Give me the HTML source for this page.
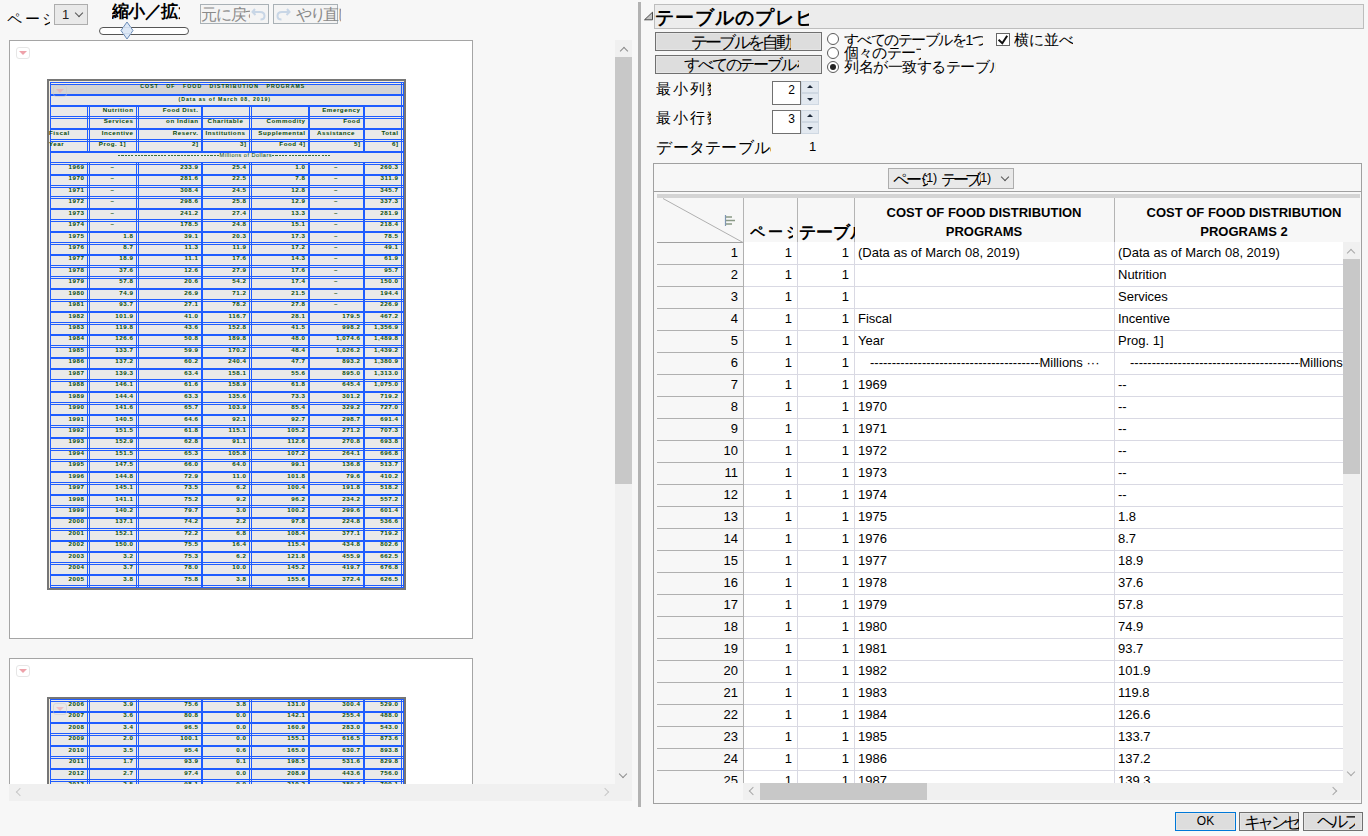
<!DOCTYPE html>
<html><head><meta charset="utf-8"><title>preview</title>
<style>
*{box-sizing:border-box}
html,body{margin:0;padding:0}
body{width:1368px;height:836px;overflow:hidden;position:relative;background:#f7f7f7;font-family:"Liberation Sans",sans-serif;font-size:13px;color:#000}
.a{position:absolute}
.nw{white-space:nowrap;overflow:hidden}
.btn{position:absolute;background:#dddddd;border:1px solid #707070;box-shadow:inset 0 0 0 1px #e5e5e5;white-space:nowrap;overflow:hidden;text-align:center;color:#000}
.dd{position:absolute;background:#e9e9e9;border:1px solid #adadad;white-space:nowrap;overflow:hidden}
.chev{position:absolute;width:6px;height:6px;border-right:1.3px solid #555;border-bottom:1.3px solid #555;transform:rotate(45deg)}
.panel{position:absolute;background:#fff;border:1px solid #a5a5a5}
.ico{position:absolute;width:14px;height:12px;border:1px solid #e6e6e6;border-radius:3px;background:#fff}
.ico:after{content:"";position:absolute;left:1.5px;top:3px;border-left:4px solid transparent;border-right:4px solid transparent;border-top:4.5px solid #eea2aa}
.radio{position:absolute;width:12px;height:12px;border:1px solid #5a5a5a;border-radius:50%;background:#fff}
.rowl{position:absolute;left:0;right:0;height:1px;background:#dcdce6}
.td{position:absolute;white-space:nowrap;overflow:hidden;height:22px;line-height:22px}
</style></head>
<body>
<div class="a" style="white-space:nowrap;overflow:hidden;width:42.6px;left:7.33px;top:11.35px;font-size:14.667px;line-height:17px;letter-spacing:2.57px;">ページ</div>
<div class="dd" style="left:54px;top:4px;width:34px;height:21px"><span class="a" style="left:7px;top:1px;line-height:17px;font-size:13px;color:#222">1</span><div class="chev" style="left:21px;top:5px"></div></div>
<div class="a" style="white-space:nowrap;overflow:hidden;width:68.1px;left:111.57px;top:1.55px;font-size:17.333px;line-height:19px;letter-spacing:-0.41px;font-weight:bold">縮小／拡大</div>
<div class="a" style="left:99px;top:27px;width:90px;height:8px;border:1.3px solid #555;border-radius:4px;background:#fff"></div>
<svg class="a" style="left:120px;top:21px" width="14" height="19" viewBox="0 0 14 19"><path d="M7 1 L13 9.5 L7 18 L1 9.5 Z" fill="#dde8f6" stroke="#6a8cb8" stroke-width="1"/><path d="M3 6.5 H11 M3 12.5 H11" stroke="#c9d6e8" stroke-width="0.8"/></svg>
<div class="a" style="left:200px;top:4px;width:69px;height:20px;border:1px solid #a9b1b6;background:#f4f4f4"></div>
<div class="a" style="white-space:nowrap;overflow:hidden;width:48.9px;left:201.10px;top:5.70px;font-size:16.000px;line-height:18px;letter-spacing:-1.23px;color:#8a8a8a">元に戻す</div>
<svg class="a" style="left:251px;top:7px" width="16" height="14" viewBox="0 0 16 14"><path d="M4 2 L1.5 5 L4.5 8 M1.8 5 H9 Q13.5 5 13.5 9 Q13.5 12.5 9.5 12.5" fill="none" stroke="#c8d6e6" stroke-width="2"/></svg>
<div class="a" style="left:273px;top:4px;width:65px;height:20px;border:1px solid #a9b1b6;background:#f4f4f4"></div>
<svg class="a" style="left:275px;top:7px" width="16" height="14" viewBox="0 0 16 14"><path d="M12 2 L14.5 5 L11.5 8 M14.2 5 H7 Q2.5 5 2.5 9 Q2.5 12.5 6.5 12.5" fill="none" stroke="#c8d6e6" stroke-width="2"/></svg>
<div class="a" style="white-space:nowrap;overflow:hidden;width:44.6px;left:296.40px;top:5.70px;font-size:16.000px;line-height:18px;letter-spacing:-2.67px;color:#8a8a8a">やり直し</div>
<div class="a" style="left:0;top:40px;width:615px;height:744px;overflow:hidden">
<div class="panel" style="left:9px;top:0px;width:464px;height:599px"></div>
<div class="panel" style="left:9px;top:618px;width:464px;height:200px"></div>
</div>
<div class="ico" style="left:16px;top:47px"></div>
<svg class="a" style="left:47px;top:79px" width="359" height="511" viewBox="0 0 359 511" font-family="Liberation Sans" font-size="6.2" font-weight="bold" letter-spacing="0.55" fill="#064a08" shape-rendering="crispEdges"><rect x="0" y="0" width="359" height="511" fill="#767676"/><rect x="2" y="2" width="355" height="507" fill="#f4eee0"/><rect x="4" y="5" width="351" height="503" fill="#e9e9e9"/><rect x="3" y="5" width="354" height="11" fill="#d4d4d4"/>
<rect x="3" y="3" width="354" height="1" fill="#1e5cff"/>
<rect x="3" y="5" width="354" height="1" fill="#1e5cff"/>
<rect x="3" y="15" width="354" height="1" fill="#1e5cff"/>
<rect x="3" y="16" width="354" height="1" fill="#1e5cff"/>
<rect x="3" y="26" width="354" height="1" fill="#1e5cff"/>
<rect x="3" y="27" width="354" height="1" fill="#1e5cff"/>
<rect x="3" y="37" width="354" height="1" fill="#1e5cff"/>
<rect x="3" y="39" width="354" height="1" fill="#1e5cff"/>
<rect x="3" y="49" width="354" height="1" fill="#1e5cff"/>
<rect x="3" y="50" width="354" height="1" fill="#1e5cff"/>
<rect x="3" y="60" width="354" height="1" fill="#1e5cff"/>
<rect x="3" y="62" width="354" height="1" fill="#1e5cff"/>
<rect x="3" y="72" width="354" height="1" fill="#1e5cff"/>
<rect x="3" y="73" width="354" height="1" fill="#1e5cff"/>
<rect x="3" y="83" width="354" height="1" fill="#1e5cff"/>
<rect x="3" y="85" width="354" height="1" fill="#1e5cff"/>
<rect x="3" y="95" width="354" height="1" fill="#1e5cff"/>
<rect x="3" y="96" width="354" height="1" fill="#1e5cff"/>
<rect x="3" y="106" width="354" height="1" fill="#1e5cff"/>
<rect x="3" y="108" width="354" height="1" fill="#1e5cff"/>
<rect x="3" y="117" width="354" height="1" fill="#1e5cff"/>
<rect x="3" y="119" width="354" height="1" fill="#1e5cff"/>
<rect x="3" y="129" width="354" height="1" fill="#1e5cff"/>
<rect x="3" y="130" width="354" height="1" fill="#1e5cff"/>
<rect x="3" y="140" width="354" height="1" fill="#1e5cff"/>
<rect x="3" y="142" width="354" height="1" fill="#1e5cff"/>
<rect x="3" y="152" width="354" height="1" fill="#1e5cff"/>
<rect x="3" y="153" width="354" height="1" fill="#1e5cff"/>
<rect x="3" y="163" width="354" height="1" fill="#1e5cff"/>
<rect x="3" y="165" width="354" height="1" fill="#1e5cff"/>
<rect x="3" y="175" width="354" height="1" fill="#1e5cff"/>
<rect x="3" y="176" width="354" height="1" fill="#1e5cff"/>
<rect x="3" y="186" width="354" height="1" fill="#1e5cff"/>
<rect x="3" y="188" width="354" height="1" fill="#1e5cff"/>
<rect x="3" y="197" width="354" height="1" fill="#1e5cff"/>
<rect x="3" y="199" width="354" height="1" fill="#1e5cff"/>
<rect x="3" y="209" width="354" height="1" fill="#1e5cff"/>
<rect x="3" y="210" width="354" height="1" fill="#1e5cff"/>
<rect x="3" y="220" width="354" height="1" fill="#1e5cff"/>
<rect x="3" y="222" width="354" height="1" fill="#1e5cff"/>
<rect x="3" y="232" width="354" height="1" fill="#1e5cff"/>
<rect x="3" y="233" width="354" height="1" fill="#1e5cff"/>
<rect x="3" y="243" width="354" height="1" fill="#1e5cff"/>
<rect x="3" y="245" width="354" height="1" fill="#1e5cff"/>
<rect x="3" y="255" width="354" height="1" fill="#1e5cff"/>
<rect x="3" y="256" width="354" height="1" fill="#1e5cff"/>
<rect x="3" y="266" width="354" height="1" fill="#1e5cff"/>
<rect x="3" y="268" width="354" height="1" fill="#1e5cff"/>
<rect x="3" y="278" width="354" height="1" fill="#1e5cff"/>
<rect x="3" y="279" width="354" height="1" fill="#1e5cff"/>
<rect x="3" y="289" width="354" height="1" fill="#1e5cff"/>
<rect x="3" y="290" width="354" height="1" fill="#1e5cff"/>
<rect x="3" y="300" width="354" height="1" fill="#1e5cff"/>
<rect x="3" y="302" width="354" height="1" fill="#1e5cff"/>
<rect x="3" y="312" width="354" height="1" fill="#1e5cff"/>
<rect x="3" y="313" width="354" height="1" fill="#1e5cff"/>
<rect x="3" y="323" width="354" height="1" fill="#1e5cff"/>
<rect x="3" y="325" width="354" height="1" fill="#1e5cff"/>
<rect x="3" y="335" width="354" height="1" fill="#1e5cff"/>
<rect x="3" y="336" width="354" height="1" fill="#1e5cff"/>
<rect x="3" y="346" width="354" height="1" fill="#1e5cff"/>
<rect x="3" y="348" width="354" height="1" fill="#1e5cff"/>
<rect x="3" y="358" width="354" height="1" fill="#1e5cff"/>
<rect x="3" y="359" width="354" height="1" fill="#1e5cff"/>
<rect x="3" y="369" width="354" height="1" fill="#1e5cff"/>
<rect x="3" y="371" width="354" height="1" fill="#1e5cff"/>
<rect x="3" y="380" width="354" height="1" fill="#1e5cff"/>
<rect x="3" y="382" width="354" height="1" fill="#1e5cff"/>
<rect x="3" y="392" width="354" height="1" fill="#1e5cff"/>
<rect x="3" y="393" width="354" height="1" fill="#1e5cff"/>
<rect x="3" y="403" width="354" height="1" fill="#1e5cff"/>
<rect x="3" y="405" width="354" height="1" fill="#1e5cff"/>
<rect x="3" y="415" width="354" height="1" fill="#1e5cff"/>
<rect x="3" y="416" width="354" height="1" fill="#1e5cff"/>
<rect x="3" y="426" width="354" height="1" fill="#1e5cff"/>
<rect x="3" y="428" width="354" height="1" fill="#1e5cff"/>
<rect x="3" y="438" width="354" height="1" fill="#1e5cff"/>
<rect x="3" y="439" width="354" height="1" fill="#1e5cff"/>
<rect x="3" y="449" width="354" height="1" fill="#1e5cff"/>
<rect x="3" y="451" width="354" height="1" fill="#1e5cff"/>
<rect x="3" y="461" width="354" height="1" fill="#1e5cff"/>
<rect x="3" y="462" width="354" height="1" fill="#1e5cff"/>
<rect x="3" y="472" width="354" height="1" fill="#1e5cff"/>
<rect x="3" y="473" width="354" height="1" fill="#1e5cff"/>
<rect x="3" y="483" width="354" height="1" fill="#1e5cff"/>
<rect x="3" y="485" width="354" height="1" fill="#1e5cff"/>
<rect x="3" y="495" width="354" height="1" fill="#1e5cff"/>
<rect x="3" y="496" width="354" height="1" fill="#1e5cff"/>
<rect x="3" y="506" width="354" height="1" fill="#1e5cff"/>
<rect x="3" y="508" width="354" height="1" fill="#1e5cff"/>
<rect x="3" y="3" width="1" height="505" fill="#1e5cff"/>
<rect x="3" y="3" width="1" height="505" fill="#1e5cff"/>
<rect x="354" y="3" width="1" height="505" fill="#1e5cff"/>
<rect x="356" y="3" width="1" height="505" fill="#1e5cff"/>
<rect x="40" y="26" width="1" height="13" fill="#1e5cff"/>
<rect x="42" y="26" width="1" height="13" fill="#1e5cff"/>
<rect x="89" y="26" width="1" height="13" fill="#1e5cff"/>
<rect x="91" y="26" width="1" height="13" fill="#1e5cff"/>
<rect x="154" y="26" width="1" height="13" fill="#1e5cff"/>
<rect x="155" y="26" width="1" height="13" fill="#1e5cff"/>
<rect x="202" y="26" width="1" height="13" fill="#1e5cff"/>
<rect x="204" y="26" width="1" height="13" fill="#1e5cff"/>
<rect x="261" y="26" width="1" height="13" fill="#1e5cff"/>
<rect x="262" y="26" width="1" height="13" fill="#1e5cff"/>
<rect x="316" y="26" width="1" height="13" fill="#1e5cff"/>
<rect x="317" y="26" width="1" height="13" fill="#1e5cff"/>
<rect x="40" y="37" width="1" height="14" fill="#1e5cff"/>
<rect x="42" y="37" width="1" height="14" fill="#1e5cff"/>
<rect x="89" y="37" width="1" height="14" fill="#1e5cff"/>
<rect x="91" y="37" width="1" height="14" fill="#1e5cff"/>
<rect x="154" y="37" width="1" height="14" fill="#1e5cff"/>
<rect x="155" y="37" width="1" height="14" fill="#1e5cff"/>
<rect x="202" y="37" width="1" height="14" fill="#1e5cff"/>
<rect x="204" y="37" width="1" height="14" fill="#1e5cff"/>
<rect x="261" y="37" width="1" height="14" fill="#1e5cff"/>
<rect x="262" y="37" width="1" height="14" fill="#1e5cff"/>
<rect x="316" y="37" width="1" height="14" fill="#1e5cff"/>
<rect x="317" y="37" width="1" height="14" fill="#1e5cff"/>
<rect x="40" y="49" width="1" height="13" fill="#1e5cff"/>
<rect x="42" y="49" width="1" height="13" fill="#1e5cff"/>
<rect x="89" y="49" width="1" height="13" fill="#1e5cff"/>
<rect x="91" y="49" width="1" height="13" fill="#1e5cff"/>
<rect x="154" y="49" width="1" height="13" fill="#1e5cff"/>
<rect x="155" y="49" width="1" height="13" fill="#1e5cff"/>
<rect x="202" y="49" width="1" height="13" fill="#1e5cff"/>
<rect x="204" y="49" width="1" height="13" fill="#1e5cff"/>
<rect x="261" y="49" width="1" height="13" fill="#1e5cff"/>
<rect x="262" y="49" width="1" height="13" fill="#1e5cff"/>
<rect x="316" y="49" width="1" height="13" fill="#1e5cff"/>
<rect x="317" y="49" width="1" height="13" fill="#1e5cff"/>
<rect x="40" y="60" width="1" height="14" fill="#1e5cff"/>
<rect x="42" y="60" width="1" height="14" fill="#1e5cff"/>
<rect x="89" y="60" width="1" height="14" fill="#1e5cff"/>
<rect x="91" y="60" width="1" height="14" fill="#1e5cff"/>
<rect x="154" y="60" width="1" height="14" fill="#1e5cff"/>
<rect x="155" y="60" width="1" height="14" fill="#1e5cff"/>
<rect x="202" y="60" width="1" height="14" fill="#1e5cff"/>
<rect x="204" y="60" width="1" height="14" fill="#1e5cff"/>
<rect x="261" y="60" width="1" height="14" fill="#1e5cff"/>
<rect x="262" y="60" width="1" height="14" fill="#1e5cff"/>
<rect x="316" y="60" width="1" height="14" fill="#1e5cff"/>
<rect x="317" y="60" width="1" height="14" fill="#1e5cff"/>
<rect x="40" y="83" width="1" height="14" fill="#1e5cff"/>
<rect x="42" y="83" width="1" height="14" fill="#1e5cff"/>
<rect x="89" y="83" width="1" height="14" fill="#1e5cff"/>
<rect x="91" y="83" width="1" height="14" fill="#1e5cff"/>
<rect x="154" y="83" width="1" height="14" fill="#1e5cff"/>
<rect x="155" y="83" width="1" height="14" fill="#1e5cff"/>
<rect x="202" y="83" width="1" height="14" fill="#1e5cff"/>
<rect x="204" y="83" width="1" height="14" fill="#1e5cff"/>
<rect x="261" y="83" width="1" height="14" fill="#1e5cff"/>
<rect x="262" y="83" width="1" height="14" fill="#1e5cff"/>
<rect x="316" y="83" width="1" height="14" fill="#1e5cff"/>
<rect x="317" y="83" width="1" height="14" fill="#1e5cff"/>
<rect x="40" y="95" width="1" height="13" fill="#1e5cff"/>
<rect x="42" y="95" width="1" height="13" fill="#1e5cff"/>
<rect x="89" y="95" width="1" height="13" fill="#1e5cff"/>
<rect x="91" y="95" width="1" height="13" fill="#1e5cff"/>
<rect x="154" y="95" width="1" height="13" fill="#1e5cff"/>
<rect x="155" y="95" width="1" height="13" fill="#1e5cff"/>
<rect x="202" y="95" width="1" height="13" fill="#1e5cff"/>
<rect x="204" y="95" width="1" height="13" fill="#1e5cff"/>
<rect x="261" y="95" width="1" height="13" fill="#1e5cff"/>
<rect x="262" y="95" width="1" height="13" fill="#1e5cff"/>
<rect x="316" y="95" width="1" height="13" fill="#1e5cff"/>
<rect x="317" y="95" width="1" height="13" fill="#1e5cff"/>
<rect x="40" y="106" width="1" height="13" fill="#1e5cff"/>
<rect x="42" y="106" width="1" height="13" fill="#1e5cff"/>
<rect x="89" y="106" width="1" height="13" fill="#1e5cff"/>
<rect x="91" y="106" width="1" height="13" fill="#1e5cff"/>
<rect x="154" y="106" width="1" height="13" fill="#1e5cff"/>
<rect x="155" y="106" width="1" height="13" fill="#1e5cff"/>
<rect x="202" y="106" width="1" height="13" fill="#1e5cff"/>
<rect x="204" y="106" width="1" height="13" fill="#1e5cff"/>
<rect x="261" y="106" width="1" height="13" fill="#1e5cff"/>
<rect x="262" y="106" width="1" height="13" fill="#1e5cff"/>
<rect x="316" y="106" width="1" height="13" fill="#1e5cff"/>
<rect x="317" y="106" width="1" height="13" fill="#1e5cff"/>
<rect x="40" y="117" width="1" height="14" fill="#1e5cff"/>
<rect x="42" y="117" width="1" height="14" fill="#1e5cff"/>
<rect x="89" y="117" width="1" height="14" fill="#1e5cff"/>
<rect x="91" y="117" width="1" height="14" fill="#1e5cff"/>
<rect x="154" y="117" width="1" height="14" fill="#1e5cff"/>
<rect x="155" y="117" width="1" height="14" fill="#1e5cff"/>
<rect x="202" y="117" width="1" height="14" fill="#1e5cff"/>
<rect x="204" y="117" width="1" height="14" fill="#1e5cff"/>
<rect x="261" y="117" width="1" height="14" fill="#1e5cff"/>
<rect x="262" y="117" width="1" height="14" fill="#1e5cff"/>
<rect x="316" y="117" width="1" height="14" fill="#1e5cff"/>
<rect x="317" y="117" width="1" height="14" fill="#1e5cff"/>
<rect x="40" y="129" width="1" height="13" fill="#1e5cff"/>
<rect x="42" y="129" width="1" height="13" fill="#1e5cff"/>
<rect x="89" y="129" width="1" height="13" fill="#1e5cff"/>
<rect x="91" y="129" width="1" height="13" fill="#1e5cff"/>
<rect x="154" y="129" width="1" height="13" fill="#1e5cff"/>
<rect x="155" y="129" width="1" height="13" fill="#1e5cff"/>
<rect x="202" y="129" width="1" height="13" fill="#1e5cff"/>
<rect x="204" y="129" width="1" height="13" fill="#1e5cff"/>
<rect x="261" y="129" width="1" height="13" fill="#1e5cff"/>
<rect x="262" y="129" width="1" height="13" fill="#1e5cff"/>
<rect x="316" y="129" width="1" height="13" fill="#1e5cff"/>
<rect x="317" y="129" width="1" height="13" fill="#1e5cff"/>
<rect x="40" y="140" width="1" height="14" fill="#1e5cff"/>
<rect x="42" y="140" width="1" height="14" fill="#1e5cff"/>
<rect x="89" y="140" width="1" height="14" fill="#1e5cff"/>
<rect x="91" y="140" width="1" height="14" fill="#1e5cff"/>
<rect x="154" y="140" width="1" height="14" fill="#1e5cff"/>
<rect x="155" y="140" width="1" height="14" fill="#1e5cff"/>
<rect x="202" y="140" width="1" height="14" fill="#1e5cff"/>
<rect x="204" y="140" width="1" height="14" fill="#1e5cff"/>
<rect x="261" y="140" width="1" height="14" fill="#1e5cff"/>
<rect x="262" y="140" width="1" height="14" fill="#1e5cff"/>
<rect x="316" y="140" width="1" height="14" fill="#1e5cff"/>
<rect x="317" y="140" width="1" height="14" fill="#1e5cff"/>
<rect x="40" y="152" width="1" height="13" fill="#1e5cff"/>
<rect x="42" y="152" width="1" height="13" fill="#1e5cff"/>
<rect x="89" y="152" width="1" height="13" fill="#1e5cff"/>
<rect x="91" y="152" width="1" height="13" fill="#1e5cff"/>
<rect x="154" y="152" width="1" height="13" fill="#1e5cff"/>
<rect x="155" y="152" width="1" height="13" fill="#1e5cff"/>
<rect x="202" y="152" width="1" height="13" fill="#1e5cff"/>
<rect x="204" y="152" width="1" height="13" fill="#1e5cff"/>
<rect x="261" y="152" width="1" height="13" fill="#1e5cff"/>
<rect x="262" y="152" width="1" height="13" fill="#1e5cff"/>
<rect x="316" y="152" width="1" height="13" fill="#1e5cff"/>
<rect x="317" y="152" width="1" height="13" fill="#1e5cff"/>
<rect x="40" y="163" width="1" height="14" fill="#1e5cff"/>
<rect x="42" y="163" width="1" height="14" fill="#1e5cff"/>
<rect x="89" y="163" width="1" height="14" fill="#1e5cff"/>
<rect x="91" y="163" width="1" height="14" fill="#1e5cff"/>
<rect x="154" y="163" width="1" height="14" fill="#1e5cff"/>
<rect x="155" y="163" width="1" height="14" fill="#1e5cff"/>
<rect x="202" y="163" width="1" height="14" fill="#1e5cff"/>
<rect x="204" y="163" width="1" height="14" fill="#1e5cff"/>
<rect x="261" y="163" width="1" height="14" fill="#1e5cff"/>
<rect x="262" y="163" width="1" height="14" fill="#1e5cff"/>
<rect x="316" y="163" width="1" height="14" fill="#1e5cff"/>
<rect x="317" y="163" width="1" height="14" fill="#1e5cff"/>
<rect x="40" y="175" width="1" height="13" fill="#1e5cff"/>
<rect x="42" y="175" width="1" height="13" fill="#1e5cff"/>
<rect x="89" y="175" width="1" height="13" fill="#1e5cff"/>
<rect x="91" y="175" width="1" height="13" fill="#1e5cff"/>
<rect x="154" y="175" width="1" height="13" fill="#1e5cff"/>
<rect x="155" y="175" width="1" height="13" fill="#1e5cff"/>
<rect x="202" y="175" width="1" height="13" fill="#1e5cff"/>
<rect x="204" y="175" width="1" height="13" fill="#1e5cff"/>
<rect x="261" y="175" width="1" height="13" fill="#1e5cff"/>
<rect x="262" y="175" width="1" height="13" fill="#1e5cff"/>
<rect x="316" y="175" width="1" height="13" fill="#1e5cff"/>
<rect x="317" y="175" width="1" height="13" fill="#1e5cff"/>
<rect x="40" y="186" width="1" height="13" fill="#1e5cff"/>
<rect x="42" y="186" width="1" height="13" fill="#1e5cff"/>
<rect x="89" y="186" width="1" height="13" fill="#1e5cff"/>
<rect x="91" y="186" width="1" height="13" fill="#1e5cff"/>
<rect x="154" y="186" width="1" height="13" fill="#1e5cff"/>
<rect x="155" y="186" width="1" height="13" fill="#1e5cff"/>
<rect x="202" y="186" width="1" height="13" fill="#1e5cff"/>
<rect x="204" y="186" width="1" height="13" fill="#1e5cff"/>
<rect x="261" y="186" width="1" height="13" fill="#1e5cff"/>
<rect x="262" y="186" width="1" height="13" fill="#1e5cff"/>
<rect x="316" y="186" width="1" height="13" fill="#1e5cff"/>
<rect x="317" y="186" width="1" height="13" fill="#1e5cff"/>
<rect x="40" y="197" width="1" height="14" fill="#1e5cff"/>
<rect x="42" y="197" width="1" height="14" fill="#1e5cff"/>
<rect x="89" y="197" width="1" height="14" fill="#1e5cff"/>
<rect x="91" y="197" width="1" height="14" fill="#1e5cff"/>
<rect x="154" y="197" width="1" height="14" fill="#1e5cff"/>
<rect x="155" y="197" width="1" height="14" fill="#1e5cff"/>
<rect x="202" y="197" width="1" height="14" fill="#1e5cff"/>
<rect x="204" y="197" width="1" height="14" fill="#1e5cff"/>
<rect x="261" y="197" width="1" height="14" fill="#1e5cff"/>
<rect x="262" y="197" width="1" height="14" fill="#1e5cff"/>
<rect x="316" y="197" width="1" height="14" fill="#1e5cff"/>
<rect x="317" y="197" width="1" height="14" fill="#1e5cff"/>
<rect x="40" y="209" width="1" height="13" fill="#1e5cff"/>
<rect x="42" y="209" width="1" height="13" fill="#1e5cff"/>
<rect x="89" y="209" width="1" height="13" fill="#1e5cff"/>
<rect x="91" y="209" width="1" height="13" fill="#1e5cff"/>
<rect x="154" y="209" width="1" height="13" fill="#1e5cff"/>
<rect x="155" y="209" width="1" height="13" fill="#1e5cff"/>
<rect x="202" y="209" width="1" height="13" fill="#1e5cff"/>
<rect x="204" y="209" width="1" height="13" fill="#1e5cff"/>
<rect x="261" y="209" width="1" height="13" fill="#1e5cff"/>
<rect x="262" y="209" width="1" height="13" fill="#1e5cff"/>
<rect x="316" y="209" width="1" height="13" fill="#1e5cff"/>
<rect x="317" y="209" width="1" height="13" fill="#1e5cff"/>
<rect x="40" y="220" width="1" height="14" fill="#1e5cff"/>
<rect x="42" y="220" width="1" height="14" fill="#1e5cff"/>
<rect x="89" y="220" width="1" height="14" fill="#1e5cff"/>
<rect x="91" y="220" width="1" height="14" fill="#1e5cff"/>
<rect x="154" y="220" width="1" height="14" fill="#1e5cff"/>
<rect x="155" y="220" width="1" height="14" fill="#1e5cff"/>
<rect x="202" y="220" width="1" height="14" fill="#1e5cff"/>
<rect x="204" y="220" width="1" height="14" fill="#1e5cff"/>
<rect x="261" y="220" width="1" height="14" fill="#1e5cff"/>
<rect x="262" y="220" width="1" height="14" fill="#1e5cff"/>
<rect x="316" y="220" width="1" height="14" fill="#1e5cff"/>
<rect x="317" y="220" width="1" height="14" fill="#1e5cff"/>
<rect x="40" y="232" width="1" height="13" fill="#1e5cff"/>
<rect x="42" y="232" width="1" height="13" fill="#1e5cff"/>
<rect x="89" y="232" width="1" height="13" fill="#1e5cff"/>
<rect x="91" y="232" width="1" height="13" fill="#1e5cff"/>
<rect x="154" y="232" width="1" height="13" fill="#1e5cff"/>
<rect x="155" y="232" width="1" height="13" fill="#1e5cff"/>
<rect x="202" y="232" width="1" height="13" fill="#1e5cff"/>
<rect x="204" y="232" width="1" height="13" fill="#1e5cff"/>
<rect x="261" y="232" width="1" height="13" fill="#1e5cff"/>
<rect x="262" y="232" width="1" height="13" fill="#1e5cff"/>
<rect x="316" y="232" width="1" height="13" fill="#1e5cff"/>
<rect x="317" y="232" width="1" height="13" fill="#1e5cff"/>
<rect x="40" y="243" width="1" height="14" fill="#1e5cff"/>
<rect x="42" y="243" width="1" height="14" fill="#1e5cff"/>
<rect x="89" y="243" width="1" height="14" fill="#1e5cff"/>
<rect x="91" y="243" width="1" height="14" fill="#1e5cff"/>
<rect x="154" y="243" width="1" height="14" fill="#1e5cff"/>
<rect x="155" y="243" width="1" height="14" fill="#1e5cff"/>
<rect x="202" y="243" width="1" height="14" fill="#1e5cff"/>
<rect x="204" y="243" width="1" height="14" fill="#1e5cff"/>
<rect x="261" y="243" width="1" height="14" fill="#1e5cff"/>
<rect x="262" y="243" width="1" height="14" fill="#1e5cff"/>
<rect x="316" y="243" width="1" height="14" fill="#1e5cff"/>
<rect x="317" y="243" width="1" height="14" fill="#1e5cff"/>
<rect x="40" y="255" width="1" height="13" fill="#1e5cff"/>
<rect x="42" y="255" width="1" height="13" fill="#1e5cff"/>
<rect x="89" y="255" width="1" height="13" fill="#1e5cff"/>
<rect x="91" y="255" width="1" height="13" fill="#1e5cff"/>
<rect x="154" y="255" width="1" height="13" fill="#1e5cff"/>
<rect x="155" y="255" width="1" height="13" fill="#1e5cff"/>
<rect x="202" y="255" width="1" height="13" fill="#1e5cff"/>
<rect x="204" y="255" width="1" height="13" fill="#1e5cff"/>
<rect x="261" y="255" width="1" height="13" fill="#1e5cff"/>
<rect x="262" y="255" width="1" height="13" fill="#1e5cff"/>
<rect x="316" y="255" width="1" height="13" fill="#1e5cff"/>
<rect x="317" y="255" width="1" height="13" fill="#1e5cff"/>
<rect x="40" y="266" width="1" height="14" fill="#1e5cff"/>
<rect x="42" y="266" width="1" height="14" fill="#1e5cff"/>
<rect x="89" y="266" width="1" height="14" fill="#1e5cff"/>
<rect x="91" y="266" width="1" height="14" fill="#1e5cff"/>
<rect x="154" y="266" width="1" height="14" fill="#1e5cff"/>
<rect x="155" y="266" width="1" height="14" fill="#1e5cff"/>
<rect x="202" y="266" width="1" height="14" fill="#1e5cff"/>
<rect x="204" y="266" width="1" height="14" fill="#1e5cff"/>
<rect x="261" y="266" width="1" height="14" fill="#1e5cff"/>
<rect x="262" y="266" width="1" height="14" fill="#1e5cff"/>
<rect x="316" y="266" width="1" height="14" fill="#1e5cff"/>
<rect x="317" y="266" width="1" height="14" fill="#1e5cff"/>
<rect x="40" y="278" width="1" height="13" fill="#1e5cff"/>
<rect x="42" y="278" width="1" height="13" fill="#1e5cff"/>
<rect x="89" y="278" width="1" height="13" fill="#1e5cff"/>
<rect x="91" y="278" width="1" height="13" fill="#1e5cff"/>
<rect x="154" y="278" width="1" height="13" fill="#1e5cff"/>
<rect x="155" y="278" width="1" height="13" fill="#1e5cff"/>
<rect x="202" y="278" width="1" height="13" fill="#1e5cff"/>
<rect x="204" y="278" width="1" height="13" fill="#1e5cff"/>
<rect x="261" y="278" width="1" height="13" fill="#1e5cff"/>
<rect x="262" y="278" width="1" height="13" fill="#1e5cff"/>
<rect x="316" y="278" width="1" height="13" fill="#1e5cff"/>
<rect x="317" y="278" width="1" height="13" fill="#1e5cff"/>
<rect x="40" y="289" width="1" height="13" fill="#1e5cff"/>
<rect x="42" y="289" width="1" height="13" fill="#1e5cff"/>
<rect x="89" y="289" width="1" height="13" fill="#1e5cff"/>
<rect x="91" y="289" width="1" height="13" fill="#1e5cff"/>
<rect x="154" y="289" width="1" height="13" fill="#1e5cff"/>
<rect x="155" y="289" width="1" height="13" fill="#1e5cff"/>
<rect x="202" y="289" width="1" height="13" fill="#1e5cff"/>
<rect x="204" y="289" width="1" height="13" fill="#1e5cff"/>
<rect x="261" y="289" width="1" height="13" fill="#1e5cff"/>
<rect x="262" y="289" width="1" height="13" fill="#1e5cff"/>
<rect x="316" y="289" width="1" height="13" fill="#1e5cff"/>
<rect x="317" y="289" width="1" height="13" fill="#1e5cff"/>
<rect x="40" y="300" width="1" height="14" fill="#1e5cff"/>
<rect x="42" y="300" width="1" height="14" fill="#1e5cff"/>
<rect x="89" y="300" width="1" height="14" fill="#1e5cff"/>
<rect x="91" y="300" width="1" height="14" fill="#1e5cff"/>
<rect x="154" y="300" width="1" height="14" fill="#1e5cff"/>
<rect x="155" y="300" width="1" height="14" fill="#1e5cff"/>
<rect x="202" y="300" width="1" height="14" fill="#1e5cff"/>
<rect x="204" y="300" width="1" height="14" fill="#1e5cff"/>
<rect x="261" y="300" width="1" height="14" fill="#1e5cff"/>
<rect x="262" y="300" width="1" height="14" fill="#1e5cff"/>
<rect x="316" y="300" width="1" height="14" fill="#1e5cff"/>
<rect x="317" y="300" width="1" height="14" fill="#1e5cff"/>
<rect x="40" y="312" width="1" height="13" fill="#1e5cff"/>
<rect x="42" y="312" width="1" height="13" fill="#1e5cff"/>
<rect x="89" y="312" width="1" height="13" fill="#1e5cff"/>
<rect x="91" y="312" width="1" height="13" fill="#1e5cff"/>
<rect x="154" y="312" width="1" height="13" fill="#1e5cff"/>
<rect x="155" y="312" width="1" height="13" fill="#1e5cff"/>
<rect x="202" y="312" width="1" height="13" fill="#1e5cff"/>
<rect x="204" y="312" width="1" height="13" fill="#1e5cff"/>
<rect x="261" y="312" width="1" height="13" fill="#1e5cff"/>
<rect x="262" y="312" width="1" height="13" fill="#1e5cff"/>
<rect x="316" y="312" width="1" height="13" fill="#1e5cff"/>
<rect x="317" y="312" width="1" height="13" fill="#1e5cff"/>
<rect x="40" y="323" width="1" height="14" fill="#1e5cff"/>
<rect x="42" y="323" width="1" height="14" fill="#1e5cff"/>
<rect x="89" y="323" width="1" height="14" fill="#1e5cff"/>
<rect x="91" y="323" width="1" height="14" fill="#1e5cff"/>
<rect x="154" y="323" width="1" height="14" fill="#1e5cff"/>
<rect x="155" y="323" width="1" height="14" fill="#1e5cff"/>
<rect x="202" y="323" width="1" height="14" fill="#1e5cff"/>
<rect x="204" y="323" width="1" height="14" fill="#1e5cff"/>
<rect x="261" y="323" width="1" height="14" fill="#1e5cff"/>
<rect x="262" y="323" width="1" height="14" fill="#1e5cff"/>
<rect x="316" y="323" width="1" height="14" fill="#1e5cff"/>
<rect x="317" y="323" width="1" height="14" fill="#1e5cff"/>
<rect x="40" y="335" width="1" height="13" fill="#1e5cff"/>
<rect x="42" y="335" width="1" height="13" fill="#1e5cff"/>
<rect x="89" y="335" width="1" height="13" fill="#1e5cff"/>
<rect x="91" y="335" width="1" height="13" fill="#1e5cff"/>
<rect x="154" y="335" width="1" height="13" fill="#1e5cff"/>
<rect x="155" y="335" width="1" height="13" fill="#1e5cff"/>
<rect x="202" y="335" width="1" height="13" fill="#1e5cff"/>
<rect x="204" y="335" width="1" height="13" fill="#1e5cff"/>
<rect x="261" y="335" width="1" height="13" fill="#1e5cff"/>
<rect x="262" y="335" width="1" height="13" fill="#1e5cff"/>
<rect x="316" y="335" width="1" height="13" fill="#1e5cff"/>
<rect x="317" y="335" width="1" height="13" fill="#1e5cff"/>
<rect x="40" y="346" width="1" height="14" fill="#1e5cff"/>
<rect x="42" y="346" width="1" height="14" fill="#1e5cff"/>
<rect x="89" y="346" width="1" height="14" fill="#1e5cff"/>
<rect x="91" y="346" width="1" height="14" fill="#1e5cff"/>
<rect x="154" y="346" width="1" height="14" fill="#1e5cff"/>
<rect x="155" y="346" width="1" height="14" fill="#1e5cff"/>
<rect x="202" y="346" width="1" height="14" fill="#1e5cff"/>
<rect x="204" y="346" width="1" height="14" fill="#1e5cff"/>
<rect x="261" y="346" width="1" height="14" fill="#1e5cff"/>
<rect x="262" y="346" width="1" height="14" fill="#1e5cff"/>
<rect x="316" y="346" width="1" height="14" fill="#1e5cff"/>
<rect x="317" y="346" width="1" height="14" fill="#1e5cff"/>
<rect x="40" y="358" width="1" height="13" fill="#1e5cff"/>
<rect x="42" y="358" width="1" height="13" fill="#1e5cff"/>
<rect x="89" y="358" width="1" height="13" fill="#1e5cff"/>
<rect x="91" y="358" width="1" height="13" fill="#1e5cff"/>
<rect x="154" y="358" width="1" height="13" fill="#1e5cff"/>
<rect x="155" y="358" width="1" height="13" fill="#1e5cff"/>
<rect x="202" y="358" width="1" height="13" fill="#1e5cff"/>
<rect x="204" y="358" width="1" height="13" fill="#1e5cff"/>
<rect x="261" y="358" width="1" height="13" fill="#1e5cff"/>
<rect x="262" y="358" width="1" height="13" fill="#1e5cff"/>
<rect x="316" y="358" width="1" height="13" fill="#1e5cff"/>
<rect x="317" y="358" width="1" height="13" fill="#1e5cff"/>
<rect x="40" y="369" width="1" height="13" fill="#1e5cff"/>
<rect x="42" y="369" width="1" height="13" fill="#1e5cff"/>
<rect x="89" y="369" width="1" height="13" fill="#1e5cff"/>
<rect x="91" y="369" width="1" height="13" fill="#1e5cff"/>
<rect x="154" y="369" width="1" height="13" fill="#1e5cff"/>
<rect x="155" y="369" width="1" height="13" fill="#1e5cff"/>
<rect x="202" y="369" width="1" height="13" fill="#1e5cff"/>
<rect x="204" y="369" width="1" height="13" fill="#1e5cff"/>
<rect x="261" y="369" width="1" height="13" fill="#1e5cff"/>
<rect x="262" y="369" width="1" height="13" fill="#1e5cff"/>
<rect x="316" y="369" width="1" height="13" fill="#1e5cff"/>
<rect x="317" y="369" width="1" height="13" fill="#1e5cff"/>
<rect x="40" y="380" width="1" height="14" fill="#1e5cff"/>
<rect x="42" y="380" width="1" height="14" fill="#1e5cff"/>
<rect x="89" y="380" width="1" height="14" fill="#1e5cff"/>
<rect x="91" y="380" width="1" height="14" fill="#1e5cff"/>
<rect x="154" y="380" width="1" height="14" fill="#1e5cff"/>
<rect x="155" y="380" width="1" height="14" fill="#1e5cff"/>
<rect x="202" y="380" width="1" height="14" fill="#1e5cff"/>
<rect x="204" y="380" width="1" height="14" fill="#1e5cff"/>
<rect x="261" y="380" width="1" height="14" fill="#1e5cff"/>
<rect x="262" y="380" width="1" height="14" fill="#1e5cff"/>
<rect x="316" y="380" width="1" height="14" fill="#1e5cff"/>
<rect x="317" y="380" width="1" height="14" fill="#1e5cff"/>
<rect x="40" y="392" width="1" height="13" fill="#1e5cff"/>
<rect x="42" y="392" width="1" height="13" fill="#1e5cff"/>
<rect x="89" y="392" width="1" height="13" fill="#1e5cff"/>
<rect x="91" y="392" width="1" height="13" fill="#1e5cff"/>
<rect x="154" y="392" width="1" height="13" fill="#1e5cff"/>
<rect x="155" y="392" width="1" height="13" fill="#1e5cff"/>
<rect x="202" y="392" width="1" height="13" fill="#1e5cff"/>
<rect x="204" y="392" width="1" height="13" fill="#1e5cff"/>
<rect x="261" y="392" width="1" height="13" fill="#1e5cff"/>
<rect x="262" y="392" width="1" height="13" fill="#1e5cff"/>
<rect x="316" y="392" width="1" height="13" fill="#1e5cff"/>
<rect x="317" y="392" width="1" height="13" fill="#1e5cff"/>
<rect x="40" y="403" width="1" height="14" fill="#1e5cff"/>
<rect x="42" y="403" width="1" height="14" fill="#1e5cff"/>
<rect x="89" y="403" width="1" height="14" fill="#1e5cff"/>
<rect x="91" y="403" width="1" height="14" fill="#1e5cff"/>
<rect x="154" y="403" width="1" height="14" fill="#1e5cff"/>
<rect x="155" y="403" width="1" height="14" fill="#1e5cff"/>
<rect x="202" y="403" width="1" height="14" fill="#1e5cff"/>
<rect x="204" y="403" width="1" height="14" fill="#1e5cff"/>
<rect x="261" y="403" width="1" height="14" fill="#1e5cff"/>
<rect x="262" y="403" width="1" height="14" fill="#1e5cff"/>
<rect x="316" y="403" width="1" height="14" fill="#1e5cff"/>
<rect x="317" y="403" width="1" height="14" fill="#1e5cff"/>
<rect x="40" y="415" width="1" height="13" fill="#1e5cff"/>
<rect x="42" y="415" width="1" height="13" fill="#1e5cff"/>
<rect x="89" y="415" width="1" height="13" fill="#1e5cff"/>
<rect x="91" y="415" width="1" height="13" fill="#1e5cff"/>
<rect x="154" y="415" width="1" height="13" fill="#1e5cff"/>
<rect x="155" y="415" width="1" height="13" fill="#1e5cff"/>
<rect x="202" y="415" width="1" height="13" fill="#1e5cff"/>
<rect x="204" y="415" width="1" height="13" fill="#1e5cff"/>
<rect x="261" y="415" width="1" height="13" fill="#1e5cff"/>
<rect x="262" y="415" width="1" height="13" fill="#1e5cff"/>
<rect x="316" y="415" width="1" height="13" fill="#1e5cff"/>
<rect x="317" y="415" width="1" height="13" fill="#1e5cff"/>
<rect x="40" y="426" width="1" height="14" fill="#1e5cff"/>
<rect x="42" y="426" width="1" height="14" fill="#1e5cff"/>
<rect x="89" y="426" width="1" height="14" fill="#1e5cff"/>
<rect x="91" y="426" width="1" height="14" fill="#1e5cff"/>
<rect x="154" y="426" width="1" height="14" fill="#1e5cff"/>
<rect x="155" y="426" width="1" height="14" fill="#1e5cff"/>
<rect x="202" y="426" width="1" height="14" fill="#1e5cff"/>
<rect x="204" y="426" width="1" height="14" fill="#1e5cff"/>
<rect x="261" y="426" width="1" height="14" fill="#1e5cff"/>
<rect x="262" y="426" width="1" height="14" fill="#1e5cff"/>
<rect x="316" y="426" width="1" height="14" fill="#1e5cff"/>
<rect x="317" y="426" width="1" height="14" fill="#1e5cff"/>
<rect x="40" y="438" width="1" height="13" fill="#1e5cff"/>
<rect x="42" y="438" width="1" height="13" fill="#1e5cff"/>
<rect x="89" y="438" width="1" height="13" fill="#1e5cff"/>
<rect x="91" y="438" width="1" height="13" fill="#1e5cff"/>
<rect x="154" y="438" width="1" height="13" fill="#1e5cff"/>
<rect x="155" y="438" width="1" height="13" fill="#1e5cff"/>
<rect x="202" y="438" width="1" height="13" fill="#1e5cff"/>
<rect x="204" y="438" width="1" height="13" fill="#1e5cff"/>
<rect x="261" y="438" width="1" height="13" fill="#1e5cff"/>
<rect x="262" y="438" width="1" height="13" fill="#1e5cff"/>
<rect x="316" y="438" width="1" height="13" fill="#1e5cff"/>
<rect x="317" y="438" width="1" height="13" fill="#1e5cff"/>
<rect x="40" y="449" width="1" height="14" fill="#1e5cff"/>
<rect x="42" y="449" width="1" height="14" fill="#1e5cff"/>
<rect x="89" y="449" width="1" height="14" fill="#1e5cff"/>
<rect x="91" y="449" width="1" height="14" fill="#1e5cff"/>
<rect x="154" y="449" width="1" height="14" fill="#1e5cff"/>
<rect x="155" y="449" width="1" height="14" fill="#1e5cff"/>
<rect x="202" y="449" width="1" height="14" fill="#1e5cff"/>
<rect x="204" y="449" width="1" height="14" fill="#1e5cff"/>
<rect x="261" y="449" width="1" height="14" fill="#1e5cff"/>
<rect x="262" y="449" width="1" height="14" fill="#1e5cff"/>
<rect x="316" y="449" width="1" height="14" fill="#1e5cff"/>
<rect x="317" y="449" width="1" height="14" fill="#1e5cff"/>
<rect x="40" y="461" width="1" height="13" fill="#1e5cff"/>
<rect x="42" y="461" width="1" height="13" fill="#1e5cff"/>
<rect x="89" y="461" width="1" height="13" fill="#1e5cff"/>
<rect x="91" y="461" width="1" height="13" fill="#1e5cff"/>
<rect x="154" y="461" width="1" height="13" fill="#1e5cff"/>
<rect x="155" y="461" width="1" height="13" fill="#1e5cff"/>
<rect x="202" y="461" width="1" height="13" fill="#1e5cff"/>
<rect x="204" y="461" width="1" height="13" fill="#1e5cff"/>
<rect x="261" y="461" width="1" height="13" fill="#1e5cff"/>
<rect x="262" y="461" width="1" height="13" fill="#1e5cff"/>
<rect x="316" y="461" width="1" height="13" fill="#1e5cff"/>
<rect x="317" y="461" width="1" height="13" fill="#1e5cff"/>
<rect x="40" y="472" width="1" height="13" fill="#1e5cff"/>
<rect x="42" y="472" width="1" height="13" fill="#1e5cff"/>
<rect x="89" y="472" width="1" height="13" fill="#1e5cff"/>
<rect x="91" y="472" width="1" height="13" fill="#1e5cff"/>
<rect x="154" y="472" width="1" height="13" fill="#1e5cff"/>
<rect x="155" y="472" width="1" height="13" fill="#1e5cff"/>
<rect x="202" y="472" width="1" height="13" fill="#1e5cff"/>
<rect x="204" y="472" width="1" height="13" fill="#1e5cff"/>
<rect x="261" y="472" width="1" height="13" fill="#1e5cff"/>
<rect x="262" y="472" width="1" height="13" fill="#1e5cff"/>
<rect x="316" y="472" width="1" height="13" fill="#1e5cff"/>
<rect x="317" y="472" width="1" height="13" fill="#1e5cff"/>
<rect x="40" y="483" width="1" height="14" fill="#1e5cff"/>
<rect x="42" y="483" width="1" height="14" fill="#1e5cff"/>
<rect x="89" y="483" width="1" height="14" fill="#1e5cff"/>
<rect x="91" y="483" width="1" height="14" fill="#1e5cff"/>
<rect x="154" y="483" width="1" height="14" fill="#1e5cff"/>
<rect x="155" y="483" width="1" height="14" fill="#1e5cff"/>
<rect x="202" y="483" width="1" height="14" fill="#1e5cff"/>
<rect x="204" y="483" width="1" height="14" fill="#1e5cff"/>
<rect x="261" y="483" width="1" height="14" fill="#1e5cff"/>
<rect x="262" y="483" width="1" height="14" fill="#1e5cff"/>
<rect x="316" y="483" width="1" height="14" fill="#1e5cff"/>
<rect x="317" y="483" width="1" height="14" fill="#1e5cff"/>
<rect x="40" y="495" width="1" height="13" fill="#1e5cff"/>
<rect x="42" y="495" width="1" height="13" fill="#1e5cff"/>
<rect x="89" y="495" width="1" height="13" fill="#1e5cff"/>
<rect x="91" y="495" width="1" height="13" fill="#1e5cff"/>
<rect x="154" y="495" width="1" height="13" fill="#1e5cff"/>
<rect x="155" y="495" width="1" height="13" fill="#1e5cff"/>
<rect x="202" y="495" width="1" height="13" fill="#1e5cff"/>
<rect x="204" y="495" width="1" height="13" fill="#1e5cff"/>
<rect x="261" y="495" width="1" height="13" fill="#1e5cff"/>
<rect x="262" y="495" width="1" height="13" fill="#1e5cff"/>
<rect x="316" y="495" width="1" height="13" fill="#1e5cff"/>
<rect x="317" y="495" width="1" height="13" fill="#1e5cff"/>
<text x="175.8" y="9.00" text-anchor="middle" letter-spacing="1.04" font-size="5.2" font-weight="bold">COST   OF   FOOD   DISTRIBUTION   PROGRAMS</text>
<text x="177.8" y="21.53" text-anchor="middle" letter-spacing="0.96" font-size="5.2" font-weight="bold">(Data as of March 08, 2019)</text>
<text x="86.5" y="32.77" text-anchor="end">Nutrition</text>
<text x="151.5" y="32.77" text-anchor="end">Food Dist.</text>
<text x="313.5" y="32.77" text-anchor="end">Emergency</text>
<text x="86.5" y="44.20" text-anchor="end">Services</text>
<text x="151.5" y="44.20" text-anchor="end">on Indian</text>
<text x="178.5" y="44.20" text-anchor="middle">Charitable</text>
<text x="258.5" y="44.20" text-anchor="end">Commodity</text>
<text x="313.5" y="44.20" text-anchor="end">Food</text>
<text x="2.0" y="55.64">Fiscal</text>
<text x="86.5" y="55.64" text-anchor="end">Incentive</text>
<text x="151.5" y="55.64" text-anchor="end">Reserv.</text>
<text x="178.5" y="55.64" text-anchor="middle">Institutions</text>
<text x="258.5" y="55.64" text-anchor="end">Supplemental</text>
<text x="289.0" y="55.64" text-anchor="middle">Assistance</text>
<text x="351.5" y="55.64" text-anchor="end">Total</text>
<text x="2.0" y="67.08">Year</text>
<text x="65.5" y="67.08" text-anchor="middle">Prog. 1]</text>
<text x="151.5" y="67.08" text-anchor="end">2]</text>
<text x="199.5" y="67.08" text-anchor="end">3]</text>
<text x="258.5" y="67.08" text-anchor="end">Food 4]</text>
<text x="313.5" y="67.08" text-anchor="end">5]</text>
<text x="351.5" y="67.08" text-anchor="end">6]</text>
<text x="198.8" y="78.11" text-anchor="middle" letter-spacing="0.45" font-size="5.6" font-weight="normal">Millions of Dollars</text>
<line x1="71" y1="76.61" x2="172.5" y2="76.61" stroke="#064a08" stroke-width="0.9" stroke-dasharray="2.2 1.1" opacity="0.85"/>
<line x1="225" y1="76.61" x2="284" y2="76.61" stroke="#064a08" stroke-width="0.9" stroke-dasharray="2.2 1.1" opacity="0.85"/>
<text x="37.5" y="89.94" text-anchor="end">1969</text>
<text x="65.5" y="89.94" text-anchor="middle">–</text>
<text x="151.5" y="89.94" text-anchor="end">233.9</text>
<text x="199.5" y="89.94" text-anchor="end">25.4</text>
<text x="258.5" y="89.94" text-anchor="end">1.0</text>
<text x="289.0" y="89.94" text-anchor="middle">–</text>
<text x="351.5" y="89.94" text-anchor="end">260.3</text>
<text x="37.5" y="101.38" text-anchor="end">1970</text>
<text x="65.5" y="101.38" text-anchor="middle">–</text>
<text x="151.5" y="101.38" text-anchor="end">281.6</text>
<text x="199.5" y="101.38" text-anchor="end">22.5</text>
<text x="258.5" y="101.38" text-anchor="end">7.8</text>
<text x="289.0" y="101.38" text-anchor="middle">–</text>
<text x="351.5" y="101.38" text-anchor="end">311.9</text>
<text x="37.5" y="112.81" text-anchor="end">1971</text>
<text x="65.5" y="112.81" text-anchor="middle">–</text>
<text x="151.5" y="112.81" text-anchor="end">308.4</text>
<text x="199.5" y="112.81" text-anchor="end">24.5</text>
<text x="258.5" y="112.81" text-anchor="end">12.8</text>
<text x="289.0" y="112.81" text-anchor="middle">–</text>
<text x="351.5" y="112.81" text-anchor="end">345.7</text>
<text x="37.5" y="124.25" text-anchor="end">1972</text>
<text x="65.5" y="124.25" text-anchor="middle">–</text>
<text x="151.5" y="124.25" text-anchor="end">298.6</text>
<text x="199.5" y="124.25" text-anchor="end">25.8</text>
<text x="258.5" y="124.25" text-anchor="end">12.9</text>
<text x="289.0" y="124.25" text-anchor="middle">–</text>
<text x="351.5" y="124.25" text-anchor="end">337.3</text>
<text x="37.5" y="135.69" text-anchor="end">1973</text>
<text x="65.5" y="135.69" text-anchor="middle">–</text>
<text x="151.5" y="135.69" text-anchor="end">241.2</text>
<text x="199.5" y="135.69" text-anchor="end">27.4</text>
<text x="258.5" y="135.69" text-anchor="end">13.3</text>
<text x="289.0" y="135.69" text-anchor="middle">–</text>
<text x="351.5" y="135.69" text-anchor="end">281.9</text>
<text x="37.5" y="147.12" text-anchor="end">1974</text>
<text x="65.5" y="147.12" text-anchor="middle">–</text>
<text x="151.5" y="147.12" text-anchor="end">178.5</text>
<text x="199.5" y="147.12" text-anchor="end">24.8</text>
<text x="258.5" y="147.12" text-anchor="end">15.1</text>
<text x="289.0" y="147.12" text-anchor="middle">–</text>
<text x="351.5" y="147.12" text-anchor="end">218.4</text>
<text x="37.5" y="158.56" text-anchor="end">1975</text>
<text x="86.5" y="158.56" text-anchor="end">1.8</text>
<text x="151.5" y="158.56" text-anchor="end">39.1</text>
<text x="199.5" y="158.56" text-anchor="end">20.3</text>
<text x="258.5" y="158.56" text-anchor="end">17.3</text>
<text x="289.0" y="158.56" text-anchor="middle">–</text>
<text x="351.5" y="158.56" text-anchor="end">78.5</text>
<text x="37.5" y="169.99" text-anchor="end">1976</text>
<text x="86.5" y="169.99" text-anchor="end">8.7</text>
<text x="151.5" y="169.99" text-anchor="end">11.3</text>
<text x="199.5" y="169.99" text-anchor="end">11.9</text>
<text x="258.5" y="169.99" text-anchor="end">17.2</text>
<text x="289.0" y="169.99" text-anchor="middle">–</text>
<text x="351.5" y="169.99" text-anchor="end">49.1</text>
<text x="37.5" y="181.43" text-anchor="end">1977</text>
<text x="86.5" y="181.43" text-anchor="end">18.9</text>
<text x="151.5" y="181.43" text-anchor="end">11.1</text>
<text x="199.5" y="181.43" text-anchor="end">17.6</text>
<text x="258.5" y="181.43" text-anchor="end">14.3</text>
<text x="289.0" y="181.43" text-anchor="middle">–</text>
<text x="351.5" y="181.43" text-anchor="end">61.9</text>
<text x="37.5" y="192.86" text-anchor="end">1978</text>
<text x="86.5" y="192.86" text-anchor="end">37.6</text>
<text x="151.5" y="192.86" text-anchor="end">12.6</text>
<text x="199.5" y="192.86" text-anchor="end">27.9</text>
<text x="258.5" y="192.86" text-anchor="end">17.6</text>
<text x="289.0" y="192.86" text-anchor="middle">–</text>
<text x="351.5" y="192.86" text-anchor="end">95.7</text>
<text x="37.5" y="204.30" text-anchor="end">1979</text>
<text x="86.5" y="204.30" text-anchor="end">57.8</text>
<text x="151.5" y="204.30" text-anchor="end">20.6</text>
<text x="199.5" y="204.30" text-anchor="end">54.2</text>
<text x="258.5" y="204.30" text-anchor="end">17.4</text>
<text x="289.0" y="204.30" text-anchor="middle">–</text>
<text x="351.5" y="204.30" text-anchor="end">150.0</text>
<text x="37.5" y="215.73" text-anchor="end">1980</text>
<text x="86.5" y="215.73" text-anchor="end">74.9</text>
<text x="151.5" y="215.73" text-anchor="end">26.9</text>
<text x="199.5" y="215.73" text-anchor="end">71.2</text>
<text x="258.5" y="215.73" text-anchor="end">21.5</text>
<text x="289.0" y="215.73" text-anchor="middle">–</text>
<text x="351.5" y="215.73" text-anchor="end">194.4</text>
<text x="37.5" y="227.17" text-anchor="end">1981</text>
<text x="86.5" y="227.17" text-anchor="end">93.7</text>
<text x="151.5" y="227.17" text-anchor="end">27.1</text>
<text x="199.5" y="227.17" text-anchor="end">78.2</text>
<text x="258.5" y="227.17" text-anchor="end">27.8</text>
<text x="289.0" y="227.17" text-anchor="middle">–</text>
<text x="351.5" y="227.17" text-anchor="end">226.9</text>
<text x="37.5" y="238.60" text-anchor="end">1982</text>
<text x="86.5" y="238.60" text-anchor="end">101.9</text>
<text x="151.5" y="238.60" text-anchor="end">41.0</text>
<text x="199.5" y="238.60" text-anchor="end">116.7</text>
<text x="258.5" y="238.60" text-anchor="end">28.1</text>
<text x="313.5" y="238.60" text-anchor="end">179.5</text>
<text x="351.5" y="238.60" text-anchor="end">467.2</text>
<text x="37.5" y="250.04" text-anchor="end">1983</text>
<text x="86.5" y="250.04" text-anchor="end">119.8</text>
<text x="151.5" y="250.04" text-anchor="end">43.6</text>
<text x="199.5" y="250.04" text-anchor="end">152.8</text>
<text x="258.5" y="250.04" text-anchor="end">41.5</text>
<text x="313.5" y="250.04" text-anchor="end">998.2</text>
<text x="351.5" y="250.04" text-anchor="end">1,356.9</text>
<text x="37.5" y="261.47" text-anchor="end">1984</text>
<text x="86.5" y="261.47" text-anchor="end">126.6</text>
<text x="151.5" y="261.47" text-anchor="end">50.8</text>
<text x="199.5" y="261.47" text-anchor="end">189.8</text>
<text x="258.5" y="261.47" text-anchor="end">48.0</text>
<text x="313.5" y="261.47" text-anchor="end">1,074.6</text>
<text x="351.5" y="261.47" text-anchor="end">1,489.8</text>
<text x="37.5" y="272.91" text-anchor="end">1985</text>
<text x="86.5" y="272.91" text-anchor="end">133.7</text>
<text x="151.5" y="272.91" text-anchor="end">59.9</text>
<text x="199.5" y="272.91" text-anchor="end">170.2</text>
<text x="258.5" y="272.91" text-anchor="end">48.4</text>
<text x="313.5" y="272.91" text-anchor="end">1,026.2</text>
<text x="351.5" y="272.91" text-anchor="end">1,439.2</text>
<text x="37.5" y="284.34" text-anchor="end">1986</text>
<text x="86.5" y="284.34" text-anchor="end">137.2</text>
<text x="151.5" y="284.34" text-anchor="end">60.2</text>
<text x="199.5" y="284.34" text-anchor="end">240.4</text>
<text x="258.5" y="284.34" text-anchor="end">47.7</text>
<text x="313.5" y="284.34" text-anchor="end">893.2</text>
<text x="351.5" y="284.34" text-anchor="end">1,380.9</text>
<text x="37.5" y="295.78" text-anchor="end">1987</text>
<text x="86.5" y="295.78" text-anchor="end">139.3</text>
<text x="151.5" y="295.78" text-anchor="end">63.4</text>
<text x="199.5" y="295.78" text-anchor="end">158.1</text>
<text x="258.5" y="295.78" text-anchor="end">55.6</text>
<text x="313.5" y="295.78" text-anchor="end">895.0</text>
<text x="351.5" y="295.78" text-anchor="end">1,313.0</text>
<text x="37.5" y="307.21" text-anchor="end">1988</text>
<text x="86.5" y="307.21" text-anchor="end">146.1</text>
<text x="151.5" y="307.21" text-anchor="end">61.6</text>
<text x="199.5" y="307.21" text-anchor="end">158.9</text>
<text x="258.5" y="307.21" text-anchor="end">61.8</text>
<text x="313.5" y="307.21" text-anchor="end">645.4</text>
<text x="351.5" y="307.21" text-anchor="end">1,075.0</text>
<text x="37.5" y="318.65" text-anchor="end">1989</text>
<text x="86.5" y="318.65" text-anchor="end">144.4</text>
<text x="151.5" y="318.65" text-anchor="end">63.3</text>
<text x="199.5" y="318.65" text-anchor="end">135.6</text>
<text x="258.5" y="318.65" text-anchor="end">73.3</text>
<text x="313.5" y="318.65" text-anchor="end">301.2</text>
<text x="351.5" y="318.65" text-anchor="end">719.2</text>
<text x="37.5" y="330.08" text-anchor="end">1990</text>
<text x="86.5" y="330.08" text-anchor="end">141.6</text>
<text x="151.5" y="330.08" text-anchor="end">65.7</text>
<text x="199.5" y="330.08" text-anchor="end">103.9</text>
<text x="258.5" y="330.08" text-anchor="end">85.4</text>
<text x="313.5" y="330.08" text-anchor="end">329.2</text>
<text x="351.5" y="330.08" text-anchor="end">727.0</text>
<text x="37.5" y="341.52" text-anchor="end">1991</text>
<text x="86.5" y="341.52" text-anchor="end">140.5</text>
<text x="151.5" y="341.52" text-anchor="end">64.6</text>
<text x="199.5" y="341.52" text-anchor="end">92.1</text>
<text x="258.5" y="341.52" text-anchor="end">92.7</text>
<text x="313.5" y="341.52" text-anchor="end">298.7</text>
<text x="351.5" y="341.52" text-anchor="end">691.4</text>
<text x="37.5" y="352.95" text-anchor="end">1992</text>
<text x="86.5" y="352.95" text-anchor="end">151.5</text>
<text x="151.5" y="352.95" text-anchor="end">61.8</text>
<text x="199.5" y="352.95" text-anchor="end">115.1</text>
<text x="258.5" y="352.95" text-anchor="end">105.2</text>
<text x="313.5" y="352.95" text-anchor="end">271.2</text>
<text x="351.5" y="352.95" text-anchor="end">707.3</text>
<text x="37.5" y="364.39" text-anchor="end">1993</text>
<text x="86.5" y="364.39" text-anchor="end">152.9</text>
<text x="151.5" y="364.39" text-anchor="end">62.8</text>
<text x="199.5" y="364.39" text-anchor="end">91.1</text>
<text x="258.5" y="364.39" text-anchor="end">112.6</text>
<text x="313.5" y="364.39" text-anchor="end">270.8</text>
<text x="351.5" y="364.39" text-anchor="end">693.8</text>
<text x="37.5" y="375.82" text-anchor="end">1994</text>
<text x="86.5" y="375.82" text-anchor="end">151.5</text>
<text x="151.5" y="375.82" text-anchor="end">65.3</text>
<text x="199.5" y="375.82" text-anchor="end">105.8</text>
<text x="258.5" y="375.82" text-anchor="end">107.2</text>
<text x="313.5" y="375.82" text-anchor="end">264.1</text>
<text x="351.5" y="375.82" text-anchor="end">696.8</text>
<text x="37.5" y="387.26" text-anchor="end">1995</text>
<text x="86.5" y="387.26" text-anchor="end">147.5</text>
<text x="151.5" y="387.26" text-anchor="end">66.0</text>
<text x="199.5" y="387.26" text-anchor="end">64.0</text>
<text x="258.5" y="387.26" text-anchor="end">99.1</text>
<text x="313.5" y="387.26" text-anchor="end">136.8</text>
<text x="351.5" y="387.26" text-anchor="end">513.7</text>
<text x="37.5" y="398.69" text-anchor="end">1996</text>
<text x="86.5" y="398.69" text-anchor="end">144.8</text>
<text x="151.5" y="398.69" text-anchor="end">72.9</text>
<text x="199.5" y="398.69" text-anchor="end">11.0</text>
<text x="258.5" y="398.69" text-anchor="end">101.8</text>
<text x="313.5" y="398.69" text-anchor="end">79.6</text>
<text x="351.5" y="398.69" text-anchor="end">410.2</text>
<text x="37.5" y="410.13" text-anchor="end">1997</text>
<text x="86.5" y="410.13" text-anchor="end">145.1</text>
<text x="151.5" y="410.13" text-anchor="end">73.5</text>
<text x="199.5" y="410.13" text-anchor="end">6.2</text>
<text x="258.5" y="410.13" text-anchor="end">100.4</text>
<text x="313.5" y="410.13" text-anchor="end">191.8</text>
<text x="351.5" y="410.13" text-anchor="end">518.2</text>
<text x="37.5" y="421.56" text-anchor="end">1998</text>
<text x="86.5" y="421.56" text-anchor="end">141.1</text>
<text x="151.5" y="421.56" text-anchor="end">75.2</text>
<text x="199.5" y="421.56" text-anchor="end">9.2</text>
<text x="258.5" y="421.56" text-anchor="end">96.2</text>
<text x="313.5" y="421.56" text-anchor="end">234.2</text>
<text x="351.5" y="421.56" text-anchor="end">557.2</text>
<text x="37.5" y="433.00" text-anchor="end">1999</text>
<text x="86.5" y="433.00" text-anchor="end">140.2</text>
<text x="151.5" y="433.00" text-anchor="end">79.7</text>
<text x="199.5" y="433.00" text-anchor="end">3.0</text>
<text x="258.5" y="433.00" text-anchor="end">100.2</text>
<text x="313.5" y="433.00" text-anchor="end">299.6</text>
<text x="351.5" y="433.00" text-anchor="end">601.4</text>
<text x="37.5" y="444.43" text-anchor="end">2000</text>
<text x="86.5" y="444.43" text-anchor="end">137.1</text>
<text x="151.5" y="444.43" text-anchor="end">74.2</text>
<text x="199.5" y="444.43" text-anchor="end">2.2</text>
<text x="258.5" y="444.43" text-anchor="end">97.8</text>
<text x="313.5" y="444.43" text-anchor="end">224.8</text>
<text x="351.5" y="444.43" text-anchor="end">536.6</text>
<text x="37.5" y="455.87" text-anchor="end">2001</text>
<text x="86.5" y="455.87" text-anchor="end">152.1</text>
<text x="151.5" y="455.87" text-anchor="end">72.2</text>
<text x="199.5" y="455.87" text-anchor="end">6.8</text>
<text x="258.5" y="455.87" text-anchor="end">108.4</text>
<text x="313.5" y="455.87" text-anchor="end">377.1</text>
<text x="351.5" y="455.87" text-anchor="end">719.2</text>
<text x="37.5" y="467.30" text-anchor="end">2002</text>
<text x="86.5" y="467.30" text-anchor="end">150.0</text>
<text x="151.5" y="467.30" text-anchor="end">75.5</text>
<text x="199.5" y="467.30" text-anchor="end">16.4</text>
<text x="258.5" y="467.30" text-anchor="end">115.4</text>
<text x="313.5" y="467.30" text-anchor="end">434.8</text>
<text x="351.5" y="467.30" text-anchor="end">802.6</text>
<text x="37.5" y="478.74" text-anchor="end">2003</text>
<text x="86.5" y="478.74" text-anchor="end">3.2</text>
<text x="151.5" y="478.74" text-anchor="end">75.3</text>
<text x="199.5" y="478.74" text-anchor="end">6.2</text>
<text x="258.5" y="478.74" text-anchor="end">121.8</text>
<text x="313.5" y="478.74" text-anchor="end">455.9</text>
<text x="351.5" y="478.74" text-anchor="end">662.5</text>
<text x="37.5" y="490.17" text-anchor="end">2004</text>
<text x="86.5" y="490.17" text-anchor="end">3.7</text>
<text x="151.5" y="490.17" text-anchor="end">78.0</text>
<text x="199.5" y="490.17" text-anchor="end">10.0</text>
<text x="258.5" y="490.17" text-anchor="end">145.2</text>
<text x="313.5" y="490.17" text-anchor="end">419.7</text>
<text x="351.5" y="490.17" text-anchor="end">676.8</text>
<text x="37.5" y="501.61" text-anchor="end">2005</text>
<text x="86.5" y="501.61" text-anchor="end">3.8</text>
<text x="151.5" y="501.61" text-anchor="end">75.8</text>
<text x="199.5" y="501.61" text-anchor="end">3.8</text>
<text x="258.5" y="501.61" text-anchor="end">155.6</text>
<text x="313.5" y="501.61" text-anchor="end">372.4</text>
<text x="351.5" y="501.61" text-anchor="end">626.5</text></svg>
<div class="ico" style="left:53px;top:85px;opacity:.55;border-color:#ccc;background:transparent"></div>
<div class="ico" style="left:16px;top:665px"></div>
<div class="a" style="left:0;top:690px;width:615px;height:94px;overflow:hidden"><svg class="a" style="left:47px;top:7px" width="359" height="100" viewBox="0 0 359 100" font-family="Liberation Sans" font-size="6.2" font-weight="bold" letter-spacing="0.55" fill="#064a08" shape-rendering="crispEdges"><rect x="0" y="0" width="359" height="120" fill="#767676"/><rect x="2" y="2" width="355" height="120" fill="#f4eee0"/><rect x="4" y="2" width="351" height="120" fill="#e9e9e9"/><rect x="3" y="2" width="354" height="1" fill="#1e5cff"/>
<rect x="3" y="4" width="354" height="1" fill="#1e5cff"/>
<rect x="3" y="14" width="354" height="1" fill="#1e5cff"/>
<rect x="3" y="15" width="354" height="1" fill="#1e5cff"/>
<rect x="3" y="25" width="354" height="1" fill="#1e5cff"/>
<rect x="3" y="26" width="354" height="1" fill="#1e5cff"/>
<rect x="3" y="36" width="354" height="1" fill="#1e5cff"/>
<rect x="3" y="38" width="354" height="1" fill="#1e5cff"/>
<rect x="3" y="48" width="354" height="1" fill="#1e5cff"/>
<rect x="3" y="49" width="354" height="1" fill="#1e5cff"/>
<rect x="3" y="59" width="354" height="1" fill="#1e5cff"/>
<rect x="3" y="61" width="354" height="1" fill="#1e5cff"/>
<rect x="3" y="71" width="354" height="1" fill="#1e5cff"/>
<rect x="3" y="72" width="354" height="1" fill="#1e5cff"/>
<rect x="3" y="82" width="354" height="1" fill="#1e5cff"/>
<rect x="3" y="84" width="354" height="1" fill="#1e5cff"/>
<rect x="3" y="94" width="354" height="1" fill="#1e5cff"/>
<rect x="3" y="95" width="354" height="1" fill="#1e5cff"/>
<rect x="3" y="2" width="1" height="94" fill="#1e5cff"/>
<rect x="3" y="2" width="1" height="94" fill="#1e5cff"/>
<rect x="354" y="2" width="1" height="94" fill="#1e5cff"/>
<rect x="356" y="2" width="1" height="94" fill="#1e5cff"/>
<rect x="40" y="2" width="1" height="14" fill="#1e5cff"/>
<rect x="42" y="2" width="1" height="14" fill="#1e5cff"/>
<rect x="89" y="2" width="1" height="14" fill="#1e5cff"/>
<rect x="91" y="2" width="1" height="14" fill="#1e5cff"/>
<rect x="154" y="2" width="1" height="14" fill="#1e5cff"/>
<rect x="155" y="2" width="1" height="14" fill="#1e5cff"/>
<rect x="202" y="2" width="1" height="14" fill="#1e5cff"/>
<rect x="204" y="2" width="1" height="14" fill="#1e5cff"/>
<rect x="261" y="2" width="1" height="14" fill="#1e5cff"/>
<rect x="262" y="2" width="1" height="14" fill="#1e5cff"/>
<rect x="316" y="2" width="1" height="14" fill="#1e5cff"/>
<rect x="317" y="2" width="1" height="14" fill="#1e5cff"/>
<rect x="40" y="14" width="1" height="13" fill="#1e5cff"/>
<rect x="42" y="14" width="1" height="13" fill="#1e5cff"/>
<rect x="89" y="14" width="1" height="13" fill="#1e5cff"/>
<rect x="91" y="14" width="1" height="13" fill="#1e5cff"/>
<rect x="154" y="14" width="1" height="13" fill="#1e5cff"/>
<rect x="155" y="14" width="1" height="13" fill="#1e5cff"/>
<rect x="202" y="14" width="1" height="13" fill="#1e5cff"/>
<rect x="204" y="14" width="1" height="13" fill="#1e5cff"/>
<rect x="261" y="14" width="1" height="13" fill="#1e5cff"/>
<rect x="262" y="14" width="1" height="13" fill="#1e5cff"/>
<rect x="316" y="14" width="1" height="13" fill="#1e5cff"/>
<rect x="317" y="14" width="1" height="13" fill="#1e5cff"/>
<rect x="40" y="25" width="1" height="13" fill="#1e5cff"/>
<rect x="42" y="25" width="1" height="13" fill="#1e5cff"/>
<rect x="89" y="25" width="1" height="13" fill="#1e5cff"/>
<rect x="91" y="25" width="1" height="13" fill="#1e5cff"/>
<rect x="154" y="25" width="1" height="13" fill="#1e5cff"/>
<rect x="155" y="25" width="1" height="13" fill="#1e5cff"/>
<rect x="202" y="25" width="1" height="13" fill="#1e5cff"/>
<rect x="204" y="25" width="1" height="13" fill="#1e5cff"/>
<rect x="261" y="25" width="1" height="13" fill="#1e5cff"/>
<rect x="262" y="25" width="1" height="13" fill="#1e5cff"/>
<rect x="316" y="25" width="1" height="13" fill="#1e5cff"/>
<rect x="317" y="25" width="1" height="13" fill="#1e5cff"/>
<rect x="40" y="36" width="1" height="14" fill="#1e5cff"/>
<rect x="42" y="36" width="1" height="14" fill="#1e5cff"/>
<rect x="89" y="36" width="1" height="14" fill="#1e5cff"/>
<rect x="91" y="36" width="1" height="14" fill="#1e5cff"/>
<rect x="154" y="36" width="1" height="14" fill="#1e5cff"/>
<rect x="155" y="36" width="1" height="14" fill="#1e5cff"/>
<rect x="202" y="36" width="1" height="14" fill="#1e5cff"/>
<rect x="204" y="36" width="1" height="14" fill="#1e5cff"/>
<rect x="261" y="36" width="1" height="14" fill="#1e5cff"/>
<rect x="262" y="36" width="1" height="14" fill="#1e5cff"/>
<rect x="316" y="36" width="1" height="14" fill="#1e5cff"/>
<rect x="317" y="36" width="1" height="14" fill="#1e5cff"/>
<rect x="40" y="48" width="1" height="13" fill="#1e5cff"/>
<rect x="42" y="48" width="1" height="13" fill="#1e5cff"/>
<rect x="89" y="48" width="1" height="13" fill="#1e5cff"/>
<rect x="91" y="48" width="1" height="13" fill="#1e5cff"/>
<rect x="154" y="48" width="1" height="13" fill="#1e5cff"/>
<rect x="155" y="48" width="1" height="13" fill="#1e5cff"/>
<rect x="202" y="48" width="1" height="13" fill="#1e5cff"/>
<rect x="204" y="48" width="1" height="13" fill="#1e5cff"/>
<rect x="261" y="48" width="1" height="13" fill="#1e5cff"/>
<rect x="262" y="48" width="1" height="13" fill="#1e5cff"/>
<rect x="316" y="48" width="1" height="13" fill="#1e5cff"/>
<rect x="317" y="48" width="1" height="13" fill="#1e5cff"/>
<rect x="40" y="59" width="1" height="14" fill="#1e5cff"/>
<rect x="42" y="59" width="1" height="14" fill="#1e5cff"/>
<rect x="89" y="59" width="1" height="14" fill="#1e5cff"/>
<rect x="91" y="59" width="1" height="14" fill="#1e5cff"/>
<rect x="154" y="59" width="1" height="14" fill="#1e5cff"/>
<rect x="155" y="59" width="1" height="14" fill="#1e5cff"/>
<rect x="202" y="59" width="1" height="14" fill="#1e5cff"/>
<rect x="204" y="59" width="1" height="14" fill="#1e5cff"/>
<rect x="261" y="59" width="1" height="14" fill="#1e5cff"/>
<rect x="262" y="59" width="1" height="14" fill="#1e5cff"/>
<rect x="316" y="59" width="1" height="14" fill="#1e5cff"/>
<rect x="317" y="59" width="1" height="14" fill="#1e5cff"/>
<rect x="40" y="71" width="1" height="13" fill="#1e5cff"/>
<rect x="42" y="71" width="1" height="13" fill="#1e5cff"/>
<rect x="89" y="71" width="1" height="13" fill="#1e5cff"/>
<rect x="91" y="71" width="1" height="13" fill="#1e5cff"/>
<rect x="154" y="71" width="1" height="13" fill="#1e5cff"/>
<rect x="155" y="71" width="1" height="13" fill="#1e5cff"/>
<rect x="202" y="71" width="1" height="13" fill="#1e5cff"/>
<rect x="204" y="71" width="1" height="13" fill="#1e5cff"/>
<rect x="261" y="71" width="1" height="13" fill="#1e5cff"/>
<rect x="262" y="71" width="1" height="13" fill="#1e5cff"/>
<rect x="316" y="71" width="1" height="13" fill="#1e5cff"/>
<rect x="317" y="71" width="1" height="13" fill="#1e5cff"/>
<rect x="40" y="82" width="1" height="14" fill="#1e5cff"/>
<rect x="42" y="82" width="1" height="14" fill="#1e5cff"/>
<rect x="89" y="82" width="1" height="14" fill="#1e5cff"/>
<rect x="91" y="82" width="1" height="14" fill="#1e5cff"/>
<rect x="154" y="82" width="1" height="14" fill="#1e5cff"/>
<rect x="155" y="82" width="1" height="14" fill="#1e5cff"/>
<rect x="202" y="82" width="1" height="14" fill="#1e5cff"/>
<rect x="204" y="82" width="1" height="14" fill="#1e5cff"/>
<rect x="261" y="82" width="1" height="14" fill="#1e5cff"/>
<rect x="262" y="82" width="1" height="14" fill="#1e5cff"/>
<rect x="316" y="82" width="1" height="14" fill="#1e5cff"/>
<rect x="317" y="82" width="1" height="14" fill="#1e5cff"/>
<text x="37.5" y="8.90" text-anchor="end">2006</text>
<text x="86.5" y="8.90" text-anchor="end">3.9</text>
<text x="151.5" y="8.90" text-anchor="end">75.6</text>
<text x="199.5" y="8.90" text-anchor="end">3.8</text>
<text x="258.5" y="8.90" text-anchor="end">131.0</text>
<text x="313.5" y="8.90" text-anchor="end">300.4</text>
<text x="351.5" y="8.90" text-anchor="end">529.0</text>
<text x="37.5" y="20.33" text-anchor="end">2007</text>
<text x="86.5" y="20.33" text-anchor="end">3.6</text>
<text x="151.5" y="20.33" text-anchor="end">80.8</text>
<text x="199.5" y="20.33" text-anchor="end">0.0</text>
<text x="258.5" y="20.33" text-anchor="end">142.1</text>
<text x="313.5" y="20.33" text-anchor="end">255.4</text>
<text x="351.5" y="20.33" text-anchor="end">488.0</text>
<text x="37.5" y="31.77" text-anchor="end">2008</text>
<text x="86.5" y="31.77" text-anchor="end">3.4</text>
<text x="151.5" y="31.77" text-anchor="end">96.5</text>
<text x="199.5" y="31.77" text-anchor="end">0.0</text>
<text x="258.5" y="31.77" text-anchor="end">160.9</text>
<text x="313.5" y="31.77" text-anchor="end">283.0</text>
<text x="351.5" y="31.77" text-anchor="end">543.0</text>
<text x="37.5" y="43.20" text-anchor="end">2009</text>
<text x="86.5" y="43.20" text-anchor="end">2.0</text>
<text x="151.5" y="43.20" text-anchor="end">100.1</text>
<text x="199.5" y="43.20" text-anchor="end">0.0</text>
<text x="258.5" y="43.20" text-anchor="end">155.1</text>
<text x="313.5" y="43.20" text-anchor="end">616.5</text>
<text x="351.5" y="43.20" text-anchor="end">873.6</text>
<text x="37.5" y="54.64" text-anchor="end">2010</text>
<text x="86.5" y="54.64" text-anchor="end">3.5</text>
<text x="151.5" y="54.64" text-anchor="end">95.4</text>
<text x="199.5" y="54.64" text-anchor="end">0.6</text>
<text x="258.5" y="54.64" text-anchor="end">165.0</text>
<text x="313.5" y="54.64" text-anchor="end">630.7</text>
<text x="351.5" y="54.64" text-anchor="end">893.8</text>
<text x="37.5" y="66.07" text-anchor="end">2011</text>
<text x="86.5" y="66.07" text-anchor="end">1.7</text>
<text x="151.5" y="66.07" text-anchor="end">93.9</text>
<text x="199.5" y="66.07" text-anchor="end">0.1</text>
<text x="258.5" y="66.07" text-anchor="end">198.5</text>
<text x="313.5" y="66.07" text-anchor="end">531.6</text>
<text x="351.5" y="66.07" text-anchor="end">829.8</text>
<text x="37.5" y="77.51" text-anchor="end">2012</text>
<text x="86.5" y="77.51" text-anchor="end">2.7</text>
<text x="151.5" y="77.51" text-anchor="end">97.4</text>
<text x="199.5" y="77.51" text-anchor="end">0.0</text>
<text x="258.5" y="77.51" text-anchor="end">208.9</text>
<text x="313.5" y="77.51" text-anchor="end">443.6</text>
<text x="351.5" y="77.51" text-anchor="end">756.0</text>
<text x="37.5" y="88.94" text-anchor="end">2013</text>
<text x="86.5" y="88.94" text-anchor="end">2.5</text>
<text x="151.5" y="88.94" text-anchor="end">98.1</text>
<text x="199.5" y="88.94" text-anchor="end">0.0</text>
<text x="258.5" y="88.94" text-anchor="end">210.2</text>
<text x="313.5" y="88.94" text-anchor="end">380.4</text>
<text x="351.5" y="88.94" text-anchor="end">700.1</text></svg></div>
<div class="ico" style="left:53px;top:703px;opacity:.55;border-color:#ccc;background:transparent"></div>
<div class="a" style="left:615px;top:40px;width:17px;height:744px;background:#f0f0f0"></div>
<div class="a" style="left:615px;top:57px;width:17px;height:427px;background:#c8c8c8"></div>
<div class="chev" style="left:621px;top:48px;transform:rotate(-135deg);border-color:#8a8a8a;width:6px;height:6px"></div>
<div class="chev" style="left:620px;top:771px;border-color:#8f8f8f;width:6px;height:6px"></div>
<div class="a" style="left:9px;top:784px;width:623px;height:17px;background:#f0f0f0"></div>
<div class="chev" style="left:17px;top:789px;transform:rotate(135deg);border-color:#c8c8c8;width:6px;height:6px"></div>
<div class="chev" style="left:602px;top:789px;transform:rotate(-45deg);border-color:#c8c8c8;width:6px;height:6px"></div>
<div class="a" style="left:638px;top:2px;width:3px;height:805px;background:#b2b2b2"></div>
<svg class="a" style="left:643px;top:11px" width="11" height="10" viewBox="0 0 11 10"><path d="M1.5 8.8 L9.5 8.8 L9.5 1.2 Z" fill="#c4c4c4" stroke="#3a3a3a" stroke-width="0.9" stroke-linejoin="round"/></svg>
<div class="a" style="left:654px;top:4px;width:710px;height:25px;background:#ececec;border:1px solid #bdbdbd"></div>
<div class="a" style="white-space:nowrap;overflow:hidden;width:154.8px;left:654.63px;top:6.60px;font-size:18.667px;line-height:21px;letter-spacing:1.10px;font-weight:bold">テーブルのプレビュー</div>
<div class="btn" style="left:655px;top:32px;width:167px;height:19px"></div>
<div class="a" style="white-space:nowrap;overflow:hidden;width:100.3px;left:690.57px;top:33.15px;font-size:17.333px;line-height:19px;letter-spacing:-2.68px;">テーブルを自動検出</div>
<div class="btn" style="left:655px;top:55px;width:167px;height:19px"></div>
<div class="a" style="white-space:nowrap;overflow:hidden;width:114.8px;left:684.10px;top:56.20px;font-size:16.000px;line-height:18px;letter-spacing:-2.18px;">すべてのテーブルを無視</div>
<div class="radio" style="left:827px;top:33px"></div>
<div class="a" style="white-space:nowrap;overflow:hidden;width:138.5px;left:844.03px;top:31.50px;font-size:14.667px;line-height:17px;letter-spacing:-1.54px;">すべてのテーブルを1つに連結</div>
<div class="radio" style="left:827px;top:46.5px"></div>
<div class="a" style="white-space:nowrap;overflow:hidden;width:76.8px;left:844.03px;top:45.05px;font-size:14.667px;line-height:17px;letter-spacing:-0.78px;">個々のテーブル</div>
<div class="radio" style="left:827px;top:60.5px"></div>
<div class="a" style="white-space:nowrap;overflow:hidden;width:152.4px;left:844.03px;top:58.85px;font-size:14.667px;line-height:17px;letter-spacing:-0.47px;">列名が一致するテーブルを連結</div>
<div class="a" style="left:830px;top:64px;width:6px;height:6px;border-radius:50%;background:#222"></div>
<div class="a" style="left:996px;top:33px;width:14px;height:13px;border:1px solid #666;background:#fff"></div>
<svg class="a" style="left:997px;top:34px" width="12" height="11" viewBox="0 0 12 11"><path d="M1.6 5.8 L5.3 9.2 L10.2 1.8" fill="none" stroke="#111" stroke-width="2"/></svg>
<div class="a" style="white-space:nowrap;overflow:hidden;width:59.2px;left:1013.73px;top:31.95px;font-size:14.667px;line-height:17px;letter-spacing:-0.07px;">横に並べる</div>
<div class="a" style="white-space:nowrap;overflow:hidden;width:54.5px;left:656.43px;top:81.35px;font-size:14.667px;line-height:17px;letter-spacing:2.01px;">最小列数</div>
<div class="a" style="left:772px;top:81px;width:29px;height:24px;border:1px solid #707070;background:#fff"><span class="a" style="right:5px;top:1px;line-height:14px;font-size:12px">2</span></div>
<div class="a" style="left:801px;top:81px;width:18px;height:12px;background:#e3e9f0;border:1px solid #cfd8e2"></div>
<div class="a" style="left:801px;top:93px;width:18px;height:12px;background:#e3e9f0;border:1px solid #cfd8e2"></div>
<div class="a" style="left:807px;top:85px;width:0;height:0;border-left:3px solid transparent;border-right:3px solid transparent;border-bottom:3px solid #1e2a3a"></div>
<div class="a" style="left:807px;top:98px;width:0;height:0;border-left:3px solid transparent;border-right:3px solid transparent;border-top:3px solid #1e2a3a"></div>
<div class="a" style="white-space:nowrap;overflow:hidden;width:54.5px;left:656.43px;top:110.35px;font-size:14.667px;line-height:17px;letter-spacing:2.01px;">最小行数</div>
<div class="a" style="left:772px;top:110px;width:29px;height:24px;border:1px solid #707070;background:#fff"><span class="a" style="right:5px;top:1px;line-height:14px;font-size:12px">3</span></div>
<div class="a" style="left:801px;top:110px;width:18px;height:12px;background:#e3e9f0;border:1px solid #cfd8e2"></div>
<div class="a" style="left:801px;top:122px;width:18px;height:12px;background:#e3e9f0;border:1px solid #cfd8e2"></div>
<div class="a" style="left:807px;top:114px;width:0;height:0;border-left:3px solid transparent;border-right:3px solid transparent;border-bottom:3px solid #1e2a3a"></div>
<div class="a" style="left:807px;top:127px;width:0;height:0;border-left:3px solid transparent;border-right:3px solid transparent;border-top:3px solid #1e2a3a"></div>
<div class="a" style="white-space:nowrap;overflow:hidden;width:114.9px;left:656.30px;top:138.70px;font-size:16.000px;line-height:18px;letter-spacing:0.29px;">データテーブルの数</div>
<div class="a" style="left:809px;top:139px;line-height:16px;font-size:13px">1</div>
<div class="a" style="left:653px;top:163px;width:709px;height:641px;border:1px solid #a0a0a0;background:#f7f7f7"></div>
<div class="dd" style="left:888px;top:168px;width:126px;height:21px"><div class="chev" style="left:113px;top:5px"></div></div>
<div class="a" style="white-space:nowrap;overflow:hidden;width:35.7px;left:892.70px;top:170.95px;font-size:16.000px;line-height:18px;letter-spacing:-2.45px;">ページ</div>
<div class="a" style="left:922px;top:170px;line-height:17px;font-size:12.5px">(1)</div>
<div class="a" style="white-space:nowrap;overflow:hidden;width:40.4px;left:940.90px;top:170.95px;font-size:16.000px;line-height:18px;letter-spacing:-4.07px;">テーブル</div>
<div class="a" style="left:976px;top:170px;line-height:17px;font-size:12.5px">(1)</div>
<div class="a" style="left:654px;top:191px;width:707px;height:1px;background:#a0a0a0"></div>
<div class="a" style="left:657px;top:194px;width:703px;height:4px;background:#d4d4d4"></div>
<div class="a" style="left:657px;top:242px;width:86px;height:1px;background:#a0a0a0"></div>
<svg class="a" style="left:657px;top:198px" width="87" height="45" viewBox="0 0 87 45"><path d="M6 0.5 L86 44.5" stroke="#b0b0b0" stroke-width="1"/><path d="M68.5 17 V28" stroke="#7f97b2" stroke-width="1.2"/><path d="M69 19 H75 M69 22.5 H78 M69 26 H75" stroke="#8a9a86" stroke-width="1.6"/></svg>
<div class="a" style="left:743px;top:198px;width:1px;height:44px;background:#b4b4b4"></div>
<div class="a" style="left:797px;top:198px;width:1px;height:44px;background:#b4b4b4"></div>
<div class="a" style="left:854px;top:198px;width:1px;height:44px;background:#b4b4b4"></div>
<div class="a" style="left:1114px;top:198px;width:1px;height:44px;background:#b4b4b4"></div>
<div class="a" style="white-space:nowrap;overflow:hidden;width:43.4px;left:749.93px;top:223.95px;font-size:14.667px;line-height:17px;letter-spacing:2.97px;font-weight:bold">ページ</div>
<div class="a" style="white-space:nowrap;overflow:hidden;width:56.5px;left:798.77px;top:222.50px;font-size:17.333px;line-height:19px;letter-spacing:-0.08px;font-weight:bold">テーブル</div>
<div class="a" style="left:854px;top:203px;width:260px;line-height:19px;text-align:center;font-weight:bold;font-size:13px">COST OF FOOD DISTRIBUTION<br>PROGRAMS</div>
<div class="a nw" style="left:1114px;top:203px;width:246px;line-height:19px;font-weight:bold;font-size:13px"><div style="width:260px;text-align:center">COST OF FOOD DISTRIBUTION<br>PROGRAMS 2</div></div>
<div class="a" style="left:657px;top:242px;width:686px;height:541px;overflow:hidden">
<div class="a" style="left:86px;top:0;width:600px;height:541px;background:#fff"></div>
<div class="a" style="left:0;top:22px;width:86px;height:1px;background:#b0b0b0"></div>
<div class="a" style="left:86px;top:22px;width:600px;height:1px;background:#d9d9e3"></div>
<div class="td" style="left:0;top:0px;width:81px;text-align:right">1</div>
<div class="td" style="left:86px;top:0px;width:49px;text-align:right">1</div>
<div class="td" style="left:140px;top:0px;width:52px;text-align:right">1</div>
<div class="td" style="left:201px;top:0px;width:252px">(Data as of March 08, 2019)</div>
<div class="td" style="left:461px;top:0px;width:225px">(Data as of March 08, 2019)</div>
<div class="a" style="left:0;top:44px;width:86px;height:1px;background:#b0b0b0"></div>
<div class="a" style="left:86px;top:44px;width:600px;height:1px;background:#d9d9e3"></div>
<div class="td" style="left:0;top:22px;width:81px;text-align:right">2</div>
<div class="td" style="left:86px;top:22px;width:49px;text-align:right">1</div>
<div class="td" style="left:140px;top:22px;width:52px;text-align:right">1</div>
<div class="td" style="left:201px;top:22px;width:252px"></div>
<div class="td" style="left:461px;top:22px;width:225px">Nutrition</div>
<div class="a" style="left:0;top:66px;width:86px;height:1px;background:#b0b0b0"></div>
<div class="a" style="left:86px;top:66px;width:600px;height:1px;background:#d9d9e3"></div>
<div class="td" style="left:0;top:44px;width:81px;text-align:right">3</div>
<div class="td" style="left:86px;top:44px;width:49px;text-align:right">1</div>
<div class="td" style="left:140px;top:44px;width:52px;text-align:right">1</div>
<div class="td" style="left:201px;top:44px;width:252px"></div>
<div class="td" style="left:461px;top:44px;width:225px">Services</div>
<div class="a" style="left:0;top:88px;width:86px;height:1px;background:#b0b0b0"></div>
<div class="a" style="left:86px;top:88px;width:600px;height:1px;background:#d9d9e3"></div>
<div class="td" style="left:0;top:66px;width:81px;text-align:right">4</div>
<div class="td" style="left:86px;top:66px;width:49px;text-align:right">1</div>
<div class="td" style="left:140px;top:66px;width:52px;text-align:right">1</div>
<div class="td" style="left:201px;top:66px;width:252px">Fiscal</div>
<div class="td" style="left:461px;top:66px;width:225px">Incentive</div>
<div class="a" style="left:0;top:110px;width:86px;height:1px;background:#b0b0b0"></div>
<div class="a" style="left:86px;top:110px;width:600px;height:1px;background:#d9d9e3"></div>
<div class="td" style="left:0;top:88px;width:81px;text-align:right">5</div>
<div class="td" style="left:86px;top:88px;width:49px;text-align:right">1</div>
<div class="td" style="left:140px;top:88px;width:52px;text-align:right">1</div>
<div class="td" style="left:201px;top:88px;width:252px">Year</div>
<div class="td" style="left:461px;top:88px;width:225px">Prog. 1]</div>
<div class="a" style="left:0;top:132px;width:86px;height:1px;background:#b0b0b0"></div>
<div class="a" style="left:86px;top:132px;width:600px;height:1px;background:#d9d9e3"></div>
<div class="td" style="left:0;top:110px;width:81px;text-align:right">6</div>
<div class="td" style="left:86px;top:110px;width:49px;text-align:right">1</div>
<div class="td" style="left:140px;top:110px;width:52px;text-align:right">1</div>
<div class="td" style="left:201px;top:110px;width:252px"><span style="display:inline-block;vertical-align:top;margin-left:12px;width:169.5px;overflow:hidden">---------------------------------------------</span>Millions <span>···</span></div>
<div class="td" style="left:461px;top:110px;width:225px"><span style="display:inline-block;vertical-align:top;margin-left:12px;width:169.5px;overflow:hidden">---------------------------------------------</span>Millions</div>
<div class="a" style="left:0;top:154px;width:86px;height:1px;background:#b0b0b0"></div>
<div class="a" style="left:86px;top:154px;width:600px;height:1px;background:#d9d9e3"></div>
<div class="td" style="left:0;top:132px;width:81px;text-align:right">7</div>
<div class="td" style="left:86px;top:132px;width:49px;text-align:right">1</div>
<div class="td" style="left:140px;top:132px;width:52px;text-align:right">1</div>
<div class="td" style="left:201px;top:132px;width:252px">1969</div>
<div class="td" style="left:461px;top:132px;width:225px">--</div>
<div class="a" style="left:0;top:176px;width:86px;height:1px;background:#b0b0b0"></div>
<div class="a" style="left:86px;top:176px;width:600px;height:1px;background:#d9d9e3"></div>
<div class="td" style="left:0;top:154px;width:81px;text-align:right">8</div>
<div class="td" style="left:86px;top:154px;width:49px;text-align:right">1</div>
<div class="td" style="left:140px;top:154px;width:52px;text-align:right">1</div>
<div class="td" style="left:201px;top:154px;width:252px">1970</div>
<div class="td" style="left:461px;top:154px;width:225px">--</div>
<div class="a" style="left:0;top:198px;width:86px;height:1px;background:#b0b0b0"></div>
<div class="a" style="left:86px;top:198px;width:600px;height:1px;background:#d9d9e3"></div>
<div class="td" style="left:0;top:176px;width:81px;text-align:right">9</div>
<div class="td" style="left:86px;top:176px;width:49px;text-align:right">1</div>
<div class="td" style="left:140px;top:176px;width:52px;text-align:right">1</div>
<div class="td" style="left:201px;top:176px;width:252px">1971</div>
<div class="td" style="left:461px;top:176px;width:225px">--</div>
<div class="a" style="left:0;top:220px;width:86px;height:1px;background:#b0b0b0"></div>
<div class="a" style="left:86px;top:220px;width:600px;height:1px;background:#d9d9e3"></div>
<div class="td" style="left:0;top:198px;width:81px;text-align:right">10</div>
<div class="td" style="left:86px;top:198px;width:49px;text-align:right">1</div>
<div class="td" style="left:140px;top:198px;width:52px;text-align:right">1</div>
<div class="td" style="left:201px;top:198px;width:252px">1972</div>
<div class="td" style="left:461px;top:198px;width:225px">--</div>
<div class="a" style="left:0;top:242px;width:86px;height:1px;background:#b0b0b0"></div>
<div class="a" style="left:86px;top:242px;width:600px;height:1px;background:#d9d9e3"></div>
<div class="td" style="left:0;top:220px;width:81px;text-align:right">11</div>
<div class="td" style="left:86px;top:220px;width:49px;text-align:right">1</div>
<div class="td" style="left:140px;top:220px;width:52px;text-align:right">1</div>
<div class="td" style="left:201px;top:220px;width:252px">1973</div>
<div class="td" style="left:461px;top:220px;width:225px">--</div>
<div class="a" style="left:0;top:264px;width:86px;height:1px;background:#b0b0b0"></div>
<div class="a" style="left:86px;top:264px;width:600px;height:1px;background:#d9d9e3"></div>
<div class="td" style="left:0;top:242px;width:81px;text-align:right">12</div>
<div class="td" style="left:86px;top:242px;width:49px;text-align:right">1</div>
<div class="td" style="left:140px;top:242px;width:52px;text-align:right">1</div>
<div class="td" style="left:201px;top:242px;width:252px">1974</div>
<div class="td" style="left:461px;top:242px;width:225px">--</div>
<div class="a" style="left:0;top:286px;width:86px;height:1px;background:#b0b0b0"></div>
<div class="a" style="left:86px;top:286px;width:600px;height:1px;background:#d9d9e3"></div>
<div class="td" style="left:0;top:264px;width:81px;text-align:right">13</div>
<div class="td" style="left:86px;top:264px;width:49px;text-align:right">1</div>
<div class="td" style="left:140px;top:264px;width:52px;text-align:right">1</div>
<div class="td" style="left:201px;top:264px;width:252px">1975</div>
<div class="td" style="left:461px;top:264px;width:225px">1.8</div>
<div class="a" style="left:0;top:308px;width:86px;height:1px;background:#b0b0b0"></div>
<div class="a" style="left:86px;top:308px;width:600px;height:1px;background:#d9d9e3"></div>
<div class="td" style="left:0;top:286px;width:81px;text-align:right">14</div>
<div class="td" style="left:86px;top:286px;width:49px;text-align:right">1</div>
<div class="td" style="left:140px;top:286px;width:52px;text-align:right">1</div>
<div class="td" style="left:201px;top:286px;width:252px">1976</div>
<div class="td" style="left:461px;top:286px;width:225px">8.7</div>
<div class="a" style="left:0;top:330px;width:86px;height:1px;background:#b0b0b0"></div>
<div class="a" style="left:86px;top:330px;width:600px;height:1px;background:#d9d9e3"></div>
<div class="td" style="left:0;top:308px;width:81px;text-align:right">15</div>
<div class="td" style="left:86px;top:308px;width:49px;text-align:right">1</div>
<div class="td" style="left:140px;top:308px;width:52px;text-align:right">1</div>
<div class="td" style="left:201px;top:308px;width:252px">1977</div>
<div class="td" style="left:461px;top:308px;width:225px">18.9</div>
<div class="a" style="left:0;top:352px;width:86px;height:1px;background:#b0b0b0"></div>
<div class="a" style="left:86px;top:352px;width:600px;height:1px;background:#d9d9e3"></div>
<div class="td" style="left:0;top:330px;width:81px;text-align:right">16</div>
<div class="td" style="left:86px;top:330px;width:49px;text-align:right">1</div>
<div class="td" style="left:140px;top:330px;width:52px;text-align:right">1</div>
<div class="td" style="left:201px;top:330px;width:252px">1978</div>
<div class="td" style="left:461px;top:330px;width:225px">37.6</div>
<div class="a" style="left:0;top:374px;width:86px;height:1px;background:#b0b0b0"></div>
<div class="a" style="left:86px;top:374px;width:600px;height:1px;background:#d9d9e3"></div>
<div class="td" style="left:0;top:352px;width:81px;text-align:right">17</div>
<div class="td" style="left:86px;top:352px;width:49px;text-align:right">1</div>
<div class="td" style="left:140px;top:352px;width:52px;text-align:right">1</div>
<div class="td" style="left:201px;top:352px;width:252px">1979</div>
<div class="td" style="left:461px;top:352px;width:225px">57.8</div>
<div class="a" style="left:0;top:396px;width:86px;height:1px;background:#b0b0b0"></div>
<div class="a" style="left:86px;top:396px;width:600px;height:1px;background:#d9d9e3"></div>
<div class="td" style="left:0;top:374px;width:81px;text-align:right">18</div>
<div class="td" style="left:86px;top:374px;width:49px;text-align:right">1</div>
<div class="td" style="left:140px;top:374px;width:52px;text-align:right">1</div>
<div class="td" style="left:201px;top:374px;width:252px">1980</div>
<div class="td" style="left:461px;top:374px;width:225px">74.9</div>
<div class="a" style="left:0;top:418px;width:86px;height:1px;background:#b0b0b0"></div>
<div class="a" style="left:86px;top:418px;width:600px;height:1px;background:#d9d9e3"></div>
<div class="td" style="left:0;top:396px;width:81px;text-align:right">19</div>
<div class="td" style="left:86px;top:396px;width:49px;text-align:right">1</div>
<div class="td" style="left:140px;top:396px;width:52px;text-align:right">1</div>
<div class="td" style="left:201px;top:396px;width:252px">1981</div>
<div class="td" style="left:461px;top:396px;width:225px">93.7</div>
<div class="a" style="left:0;top:440px;width:86px;height:1px;background:#b0b0b0"></div>
<div class="a" style="left:86px;top:440px;width:600px;height:1px;background:#d9d9e3"></div>
<div class="td" style="left:0;top:418px;width:81px;text-align:right">20</div>
<div class="td" style="left:86px;top:418px;width:49px;text-align:right">1</div>
<div class="td" style="left:140px;top:418px;width:52px;text-align:right">1</div>
<div class="td" style="left:201px;top:418px;width:252px">1982</div>
<div class="td" style="left:461px;top:418px;width:225px">101.9</div>
<div class="a" style="left:0;top:462px;width:86px;height:1px;background:#b0b0b0"></div>
<div class="a" style="left:86px;top:462px;width:600px;height:1px;background:#d9d9e3"></div>
<div class="td" style="left:0;top:440px;width:81px;text-align:right">21</div>
<div class="td" style="left:86px;top:440px;width:49px;text-align:right">1</div>
<div class="td" style="left:140px;top:440px;width:52px;text-align:right">1</div>
<div class="td" style="left:201px;top:440px;width:252px">1983</div>
<div class="td" style="left:461px;top:440px;width:225px">119.8</div>
<div class="a" style="left:0;top:484px;width:86px;height:1px;background:#b0b0b0"></div>
<div class="a" style="left:86px;top:484px;width:600px;height:1px;background:#d9d9e3"></div>
<div class="td" style="left:0;top:462px;width:81px;text-align:right">22</div>
<div class="td" style="left:86px;top:462px;width:49px;text-align:right">1</div>
<div class="td" style="left:140px;top:462px;width:52px;text-align:right">1</div>
<div class="td" style="left:201px;top:462px;width:252px">1984</div>
<div class="td" style="left:461px;top:462px;width:225px">126.6</div>
<div class="a" style="left:0;top:506px;width:86px;height:1px;background:#b0b0b0"></div>
<div class="a" style="left:86px;top:506px;width:600px;height:1px;background:#d9d9e3"></div>
<div class="td" style="left:0;top:484px;width:81px;text-align:right">23</div>
<div class="td" style="left:86px;top:484px;width:49px;text-align:right">1</div>
<div class="td" style="left:140px;top:484px;width:52px;text-align:right">1</div>
<div class="td" style="left:201px;top:484px;width:252px">1985</div>
<div class="td" style="left:461px;top:484px;width:225px">133.7</div>
<div class="a" style="left:0;top:528px;width:86px;height:1px;background:#b0b0b0"></div>
<div class="a" style="left:86px;top:528px;width:600px;height:1px;background:#d9d9e3"></div>
<div class="td" style="left:0;top:506px;width:81px;text-align:right">24</div>
<div class="td" style="left:86px;top:506px;width:49px;text-align:right">1</div>
<div class="td" style="left:140px;top:506px;width:52px;text-align:right">1</div>
<div class="td" style="left:201px;top:506px;width:252px">1986</div>
<div class="td" style="left:461px;top:506px;width:225px">137.2</div>
<div class="a" style="left:0;top:550px;width:86px;height:1px;background:#b0b0b0"></div>
<div class="a" style="left:86px;top:550px;width:600px;height:1px;background:#d9d9e3"></div>
<div class="td" style="left:0;top:528px;width:81px;text-align:right">25</div>
<div class="td" style="left:86px;top:528px;width:49px;text-align:right">1</div>
<div class="td" style="left:140px;top:528px;width:52px;text-align:right">1</div>
<div class="td" style="left:201px;top:528px;width:252px">1987</div>
<div class="td" style="left:461px;top:528px;width:225px">139.3</div>
<div class="a" style="left:86px;top:0;width:1px;height:541px;background:#d9d9e3"></div>
<div class="a" style="left:140px;top:0;width:1px;height:541px;background:#d9d9e3"></div>
<div class="a" style="left:197px;top:0;width:1px;height:541px;background:#d9d9e3"></div>
<div class="a" style="left:457px;top:0;width:1px;height:541px;background:#d9d9e3"></div>
<div class="a" style="left:86px;top:0;width:1px;height:541px;background:#b0b0b0"></div>
</div>
<div class="a" style="left:1343px;top:242px;width:17px;height:541px;background:#f0f0f0"></div>
<div class="a" style="left:1343px;top:259px;width:17px;height:215px;background:#c8c8c8"></div>
<div class="chev" style="left:1348px;top:250px;transform:rotate(-135deg);border-color:#a8a8a8"></div>
<div class="chev" style="left:1348px;top:769px;border-color:#a8a8a8"></div>
<div class="a" style="left:743px;top:783px;width:617px;height:17px;background:#f0f0f0"></div>
<div class="a" style="left:760px;top:783px;width:167px;height:17px;background:#c8c8c8"></div>
<div class="chev" style="left:750px;top:788px;transform:rotate(135deg);border-color:#a8a8a8"></div>
<div class="chev" style="left:1330px;top:788px;transform:rotate(-45deg);border-color:#a8a8a8"></div>
<div class="btn" style="left:1175px;top:812px;width:61px;height:19px;line-height:17px;font-size:12px;border-color:#0078d7">OK</div>
<div class="btn" style="left:1239px;top:812px;width:60px;height:19px"></div>
<div class="a" style="white-space:nowrap;overflow:hidden;width:54.3px;left:1244.27px;top:813.05px;font-size:17.333px;line-height:19px;letter-spacing:-3.86px;">キャンセル</div>
<div class="btn" style="left:1303px;top:812px;width:60px;height:19px"></div>
<div class="a" style="white-space:nowrap;overflow:hidden;width:37.2px;left:1317.47px;top:812.35px;font-size:17.333px;line-height:19px;letter-spacing:-3.27px;">ヘルプ</div>
</body></html>
